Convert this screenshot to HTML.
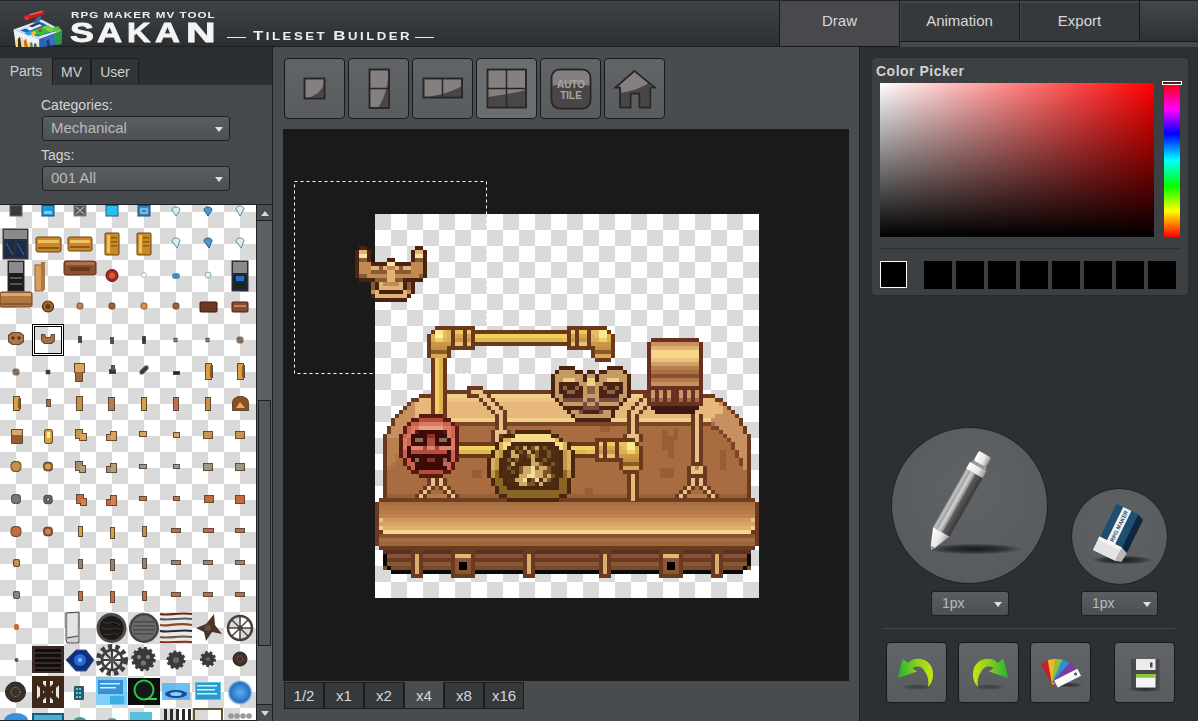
<!DOCTYPE html>
<html><head><meta charset="utf-8">
<style>
*{margin:0;padding:0;box-sizing:border-box}
html,body{width:1198px;height:721px;overflow:hidden;background:#2d3033;font-family:"Liberation Sans",sans-serif;color:#d6d6d6}
.a{position:absolute}
#hdr{left:0;top:0;width:1198px;height:47px;background:linear-gradient(#3f4346,#2c2f32);border-top:1px solid #222426;border-bottom:1px solid #1c1e20}
.htab{top:1px;height:40px;background:#36393c;border:1px solid #17191b;border-top:none;box-shadow:inset 1px 1px 0 #45484b;font-size:15px;text-align:center;line-height:38px;color:#d8d8d8}
#left{left:0;top:47px;width:272px;height:674px;background:#45494c}
#tabbar{left:0;top:0;width:272px;height:38px;background:#2c2f32}
.ltab{top:11px;height:27px;background:#323538;border:1px solid #1c1e20;border-bottom:none;font-size:14px;line-height:26px;text-align:center;color:#d0d0d0}
.lbl{font-size:14px;color:#d4d4d4}
.dd{background:linear-gradient(#5a5e61,#4c5053);border:1px solid #1d1f21;border-radius:3px;font-size:15px;color:#b9bbbc;padding-left:8px;line-height:22px}
.dd:after{content:"";position:absolute;right:6px;top:10px;border-left:4px solid transparent;border-right:4px solid transparent;border-top:5px solid #e0e0e0}
#grid{left:0;top:158px;width:256px;height:516px;background-color:#fff;background-image:linear-gradient(45deg,#dadada 25%,transparent 25%,transparent 75%,#dadada 75%),linear-gradient(45deg,#dadada 25%,transparent 25%,transparent 75%,#dadada 75%);background-size:32px 32px;background-position:0 -8px,16px 8px;overflow:hidden}
#center{left:273px;top:47px;width:586px;height:674px;background:#484c4f}
.tb{top:11px;width:61px;height:61px;border:1px solid #17191b;border-radius:4px;background:linear-gradient(#606467,#585c5f)}
#canvas{left:10px;top:82px;width:566px;height:552px;background:#1a1a1a}
.zt{top:635px;width:40px;height:27px;background:#36393c;border:1px solid #1a1c1e;font-size:15px;line-height:26px;text-align:center;color:#d6d6d6}
#right{left:860px;top:47px;width:338px;height:674px;background:#2d3033}
</style></head><body>
<div id="hdr" class="a">
  
<!-- LOGO -->
<svg class="a" style="left:10px;top:5px" width="60" height="42" viewBox="10 5 60 42">
 <!-- left face -->
 <polygon points="13.5,28.5 39.5,38 39.5,46.5 16,46.5" fill="#eef2f8"/>
 <polygon points="15.5,40 18,36.5 20,40 22,36 24,39.5 26.5,38 28,42 31,40.5 33,43 36,42 39.5,45 39.5,46.5 16,46.5" fill="#f0dc8a"/>
 <polygon points="18,38 20,35.5 21.5,46.5 18,46.5" fill="#3a2a1e"/>
 <polygon points="24,40 26,37.5 28,46.5 24.5,46.5" fill="#c86a2a"/>
 <polygon points="30,42 32,41 33,46.5 30,46.5" fill="#6a8a3a"/>
 <polygon points="34,43 36,42 37,46.5 34,46.5" fill="#3a5aa0"/>
 <!-- right face -->
 <polygon points="39.5,38 62,29.5 61.5,43 39.5,46.5" fill="#2f5fb8"/>
 <polygon points="44,37 60,31 60,42 46,45" fill="#3a70c8"/>
 <polygon points="53,33 62,29.5 61.5,43 56,44" fill="#2a9a40"/>
 <polygon points="46,40 49,38 50,45 47,45.5" fill="#1e3a80"/>
 <!-- top face frame -->
 <polygon points="13.5,28.5 41.5,18.5 62,29.5 39.5,38" fill="#dde8f4"/>
 <polygon points="20,29.5 42,21.5 57,29.8 38,35.5" fill="#1c64bc"/>
 <polygon points="29,31 42,26 52,30 40,34.5" fill="#38c038"/>
 <polygon points="42,26 48,24 55,29.5 50,31.5" fill="#7ad43a"/>
 <polygon points="24,32 30,30 33,33 28,34.5" fill="#2aa0e0"/>
 <polygon points="38,28.5 41,27.5 42.5,30.5 39.5,31.5" fill="#e03a2a"/>
 <polygon points="31,31.5 35,30 36.5,33 32.5,34.5" fill="#f0c040"/>
 <polygon points="52,27 58,25 62,29.5 56,31" fill="#58c040"/>
 <!-- scraper / pen -->
 <polygon points="26,27.5 38,22.5 42,24.5 30,29.5" fill="#f4f8fc"/>
 <polygon points="29,25 39,20.5 42,22 32,26.5" fill="#34415a"/>
 <polygon points="33,23 37.5,16 41.5,15 39,21" fill="#3a6ab8"/>
 <polygon points="25.5,14.8 43,9.5 44.5,13 27.5,19" fill="#d01818"/>
 <ellipse cx="26.5" cy="16.8" rx="2.2" ry="2.5" fill="#f02828"/>
 <polygon points="29,13.2 42,9.8 43,11 30,14.5" fill="#ff8a7a" opacity=".7"/>
</svg>
<div class="a" style="left:71px;top:7.5px;font-weight:bold;font-size:9.5px;letter-spacing:0.85px;color:#eee;transform:scaleX(1.224);transform-origin:0 0;white-space:nowrap">RPG MAKER MV TOOL</div>
  <div class="a" style="left:69.8px;top:17px;font-weight:bold;font-size:27px;color:#f4f4f4;-webkit-text-stroke:0.8px #f4f4f4;transform:scaleX(1.33);transform-origin:0 0">S</div>
  <div class="a" style="left:96.8px;top:17px;font-weight:bold;font-size:27px;color:#f4f4f4;-webkit-text-stroke:0.8px #f4f4f4;transform:scaleX(1.29);transform-origin:0 0">A</div>
  <div class="a" style="left:126.6px;top:17px;font-weight:bold;font-size:27px;color:#f4f4f4;-webkit-text-stroke:0.8px #f4f4f4;transform:scaleX(1.2);transform-origin:0 0">K</div>
  <div class="a" style="left:154.7px;top:17px;font-weight:bold;font-size:27px;color:#f4f4f4;-webkit-text-stroke:0.8px #f4f4f4;transform:scaleX(1.28);transform-origin:0 0">A</div>
  <div class="a" style="left:186.4px;top:17px;font-weight:bold;font-size:27px;color:#f4f4f4;-webkit-text-stroke:0.8px #f4f4f4;transform:scaleX(1.52);transform-origin:0 0">N</div>
  <div class="a" style="left:227px;top:36px;width:19px;height:1px;background:#e6e6e6"></div>
  <div class="a" style="left:253px;top:25px;font-weight:bold;letter-spacing:2px;color:#eee;transform:scaleX(1.255);transform-origin:0 0;white-space:nowrap"><span style="font-size:13.5px">T</span><span style="font-size:10.5px">ILESET </span><span style="font-size:13.5px">B</span><span style="font-size:10.5px">UILDER</span></div>
  <div class="a" style="left:415px;top:36px;width:19px;height:1px;background:#e6e6e6"></div>
  <div class="a" style="left:779px;top:40px;width:419px;height:6px;background:#46494c"></div>
  <div class="a" style="left:1139px;top:0;width:59px;height:41px;background:linear-gradient(#45484b,#2e3134);border-left:1px solid #17191b;border-bottom:1px solid #17191b"></div>
  <div class="a htab" style="left:779px;top:0;height:46px;width:121px;background:#47494c;line-height:40px">Draw</div>
  <div class="a htab" style="left:899px;width:121px">Animation</div>
  <div class="a htab" style="left:1019px;width:121px">Export</div>
</div>
<div id="left" class="a">
  <div id="tabbar" class="a">
    <div class="a ltab" style="left:0;width:52px;background:#45494c;border:none">Parts</div>
    <div class="a ltab" style="left:52px;width:39px">MV</div>
    <div class="a ltab" style="left:91px;width:48px">User</div>
  </div>
  <div class="a lbl" style="left:41px;top:50px">Categories:</div>
  <div class="a dd" style="left:42px;top:69px;width:188px;height:25px">Mechanical</div>
  <div class="a lbl" style="left:41px;top:100px">Tags:</div>
  <div class="a dd" style="left:42px;top:119px;width:188px;height:25px">001 All</div>
  <div class="a" style="left:0;top:157px;width:272px;height:1px;background:#1c1e20"></div>
  <div id="grid" class="a"></div>
<!-- GRID SPRITES -->
<svg class="a" style="left:0;top:158px" width="256" height="516" viewBox="0 205 256 516">
<defs>
 <pattern id="chk2" x="0" y="196" width="32" height="32" patternUnits="userSpaceOnUse">
  <rect width="32" height="32" fill="#fff"/><rect width="16" height="16" fill="#dadada"/><rect x="16" y="16" width="16" height="16" fill="#dadada"/>
 </pattern>
 <filter id="outl" x="-10%" y="-10%" width="120%" height="120%"><feMorphology in="SourceAlpha" operator="dilate" radius="0.8" result="d"/><feFlood flood-color="#4a2e14" flood-opacity=".85"/><feComposite in2="d" operator="in" result="o"/><feMerge><feMergeNode in="o"/><feMergeNode in="SourceGraphic"/></feMerge></filter><radialGradient id="bl"><stop offset="0" stop-color="#5ab0f0"/><stop offset=".8" stop-color="#2a70c0"/><stop offset="1" stop-color="#8ad0ff" stop-opacity=".4"/></radialGradient>
</defs>
<rect x="0" y="205" width="256" height="516" fill="url(#chk2)"/>
<!-- row0 -->
<rect x="10" y="205.5" width="12" height="10.5" fill="#3a3a42" stroke="#666" stroke-width="1"/>
<rect x="42" y="205.5" width="12" height="10.5" fill="#1a9ad8" stroke="#1a4a70" stroke-width="1"/><rect x="44" y="211" width="8" height="3" fill="#6ad0f8"/>
<rect x="74" y="205.5" width="12" height="10.5" fill="#5a5a62" stroke="#888" stroke-width="1"/><path d="M76,207 L84,214 M84,207 L76,214" stroke="#ccc" stroke-width="1"/>
<rect x="106" y="205.5" width="12" height="10.5" fill="#28c0f0" stroke="#1a5a80" stroke-width="1"/>
<rect x="138" y="205.5" width="12" height="10.5" fill="#2a88c8" stroke="#1a4a70" stroke-width="1"/><rect x="141" y="209" width="6" height="4" fill="none" stroke="#cde" stroke-width="1"/>
<path d="M172,210 C172,206 180,206 180,210 L176,216 Z" fill="#dceaf2" stroke="#5a8aa8" stroke-width="1"/>
<path d="M204,210 C204,206 212,206 212,210 L208,216 Z" fill="#4a9ad0" stroke="#1e5a80" stroke-width="1"/>
<path d="M236,209 C236,205 244,205 244,209 L240,216 Z" fill="#e0ecf2" stroke="#5a8aa8" stroke-width="1"/>
<!-- row1 -->
<rect x="3" y="229" width="25" height="30" fill="#2a2e38" stroke="#444" stroke-width="1"/><rect x="4" y="230" width="23" height="9" fill="#8a8a8c"/>
<rect x="5" y="241" width="9" height="16" fill="#1a2a4a"/><rect x="16" y="241" width="9" height="16" fill="#1a2a4a"/><path d="M6,243 L13,255 M17,243 L24,255" stroke="#4a6a8a" stroke-width="1"/>
<rect x="36" y="237" width="25" height="15" rx="2" fill="#c88a28" stroke="#6a4010" stroke-width="1"/><rect x="38" y="240" width="21" height="3" fill="#f0c060"/><rect x="38" y="247" width="21" height="2" fill="#8a5a18"/>
<rect x="68" y="237" width="24" height="14" rx="2" fill="#c88a28" stroke="#6a4010" stroke-width="1"/><rect x="70" y="240" width="20" height="3" fill="#f0c060"/><rect x="70" y="246" width="20" height="2" fill="#8a5a18"/>
<rect x="105" y="233" width="14" height="22" rx="1" fill="#c88a28" stroke="#6a4010" stroke-width="1"/><rect x="107" y="235" width="3" height="18" fill="#f0c060"/><g fill="#8a5a18"><rect x="111" y="237" width="6" height="1.5"/><rect x="111" y="241" width="6" height="1.5"/><rect x="111" y="245" width="6" height="1.5"/></g>
<rect x="137" y="233" width="14" height="22" rx="1" fill="#c88a28" stroke="#6a4010" stroke-width="1"/><rect x="139" y="235" width="3" height="18" fill="#f0c060"/><g fill="#8a5a18"><rect x="143" y="237" width="6" height="1.5"/><rect x="143" y="241" width="6" height="1.5"/><rect x="143" y="245" width="6" height="1.5"/></g>
<path d="M172,241 C172,237 180,237 180,241 L177,248 Z" fill="#dceaf2" stroke="#5a8aa8" stroke-width="1"/>
<path d="M204,241 C204,237 212,237 212,241 L209,248 Z" fill="#4a9ad0" stroke="#1e5a80" stroke-width="1"/>
<path d="M236,241 C236,237 244,237 244,241 L241,248 Z" fill="#e0ecf2" stroke="#5a8aa8" stroke-width="1"/>
<!-- row2 -->
<rect x="8" y="261" width="16" height="30" fill="#1a1a1a" stroke="#333" stroke-width="1"/><rect x="9" y="262" width="14" height="11" fill="#8a8a8c"/><rect x="10" y="277" width="12" height="2" fill="#555"/><rect x="10" y="283" width="12" height="2" fill="#555"/>
<rect x="35" y="265" width="8" height="26" fill="#d8a060" stroke="#8a5a30" stroke-width="1"/><rect x="41" y="262" width="4" height="28" fill="#b07840"/>
<rect x="64" y="261" width="32" height="14" rx="2" fill="#8a5030" stroke="#5a3018" stroke-width="1"/><rect x="66" y="262" width="28" height="3" fill="#b07050"/><rect x="70" y="267" width="20" height="4" fill="#6a3a20"/>
<circle cx="112" cy="275.5" r="6" fill="#a8281a" stroke="#5a1a10" stroke-width="1"/><circle cx="112" cy="275.5" r="3" fill="#d85a40"/>
<circle cx="144" cy="275" r="2.5" fill="#fff" stroke="#aaa" stroke-width=".8"/>
<ellipse cx="176" cy="276" rx="4" ry="3" fill="#3a90c0"/>
<circle cx="208" cy="275" r="3" fill="#eee" stroke="#7aa" stroke-width="1"/>
<rect x="232" y="261" width="16" height="30" fill="#1a2838" stroke="#333" stroke-width="1"/><rect x="233" y="262" width="14" height="11" fill="#8a8a8c"/><rect x="236" y="276" width="8" height="5" fill="#2a70c0"/><rect x="236" y="283" width="8" height="6" fill="#222"/>
<!-- row3 -->
<rect x="0" y="292" width="32" height="15" rx="2" fill="#b07840" stroke="#6a4020" stroke-width="1"/><rect x="1" y="293" width="30" height="3" fill="#d8a868"/><rect x="1" y="303" width="30" height="2" fill="#8a5830"/>
<circle cx="48" cy="306.5" r="5.5" fill="#a06828" stroke="#4a2a10" stroke-width="1.2"/><circle cx="48" cy="306.5" r="2.5" fill="#5a3a18"/>
<rect x="77" y="303" width="6" height="6" rx="2" fill="#c08060" stroke="#6a4030" stroke-width=".8"/>
<rect x="109" y="303" width="6" height="6" rx="2" fill="#a06040" stroke="#5a3020" stroke-width=".8"/>
<rect x="141" y="303" width="6" height="6" rx="2" fill="#d89040" stroke="#7a4a20" stroke-width=".8"/>
<rect x="173" y="303" width="6" height="6" rx="2" fill="#a06040" stroke="#5a3020" stroke-width=".8"/>
<rect x="200" y="302" width="17" height="10" rx="1" fill="#6a3a20" stroke="#3a1a08" stroke-width="1"/>
<rect x="232" y="302" width="16" height="10" rx="1" fill="#8a4a30" stroke="#4a2010" stroke-width="1"/><rect x="234" y="305" width="12" height="2" fill="#c08060"/>
<g filter="url(#outl)"><!-- row4 -->
<path d="M9,336 L13,333 L19,333 L23,336 L23,341 L19,344 L13,344 L9,341 Z" fill="#b07848"/><circle cx="13" cy="338" r="1.8" fill="#5a3418"/><circle cx="19" cy="338" r="1.8" fill="#5a3418"/>
<path d="M42,335 L44,335 L45,338 L51,338 L52,335 L54,335 L54,340 L51,343 L45,343 L42,340 Z" fill="#a87040"/>
<rect x="79" y="337" width="2" height="5" fill="#444"/><rect x="111" y="338" width="2" height="5" fill="#555"/><rect x="143" y="337" width="2" height="6" fill="#333"/>
<circle cx="175.5" cy="340" r="1.2" fill="#888"/><circle cx="207.5" cy="340" r="1.2" fill="#888"/><circle cx="240" cy="340" r="2" fill="none" stroke="#8a6040" stroke-width="1"/>
<!-- row5 -->
<circle cx="16" cy="372" r="2" fill="none" stroke="#8a6040" stroke-width="1"/><circle cx="48" cy="372" r="1.5" fill="#333"/>
<rect x="75" y="364" width="9" height="8" fill="#d8a858"/><rect x="76" y="372" width="6" height="9" fill="#a06838"/>
<rect x="110" y="370" width="5" height="3" fill="#333"/><rect x="112" y="366" width="2" height="5" fill="#555"/>
<path d="M141,373 L147,367" stroke="#333" stroke-width="2"/>
<rect x="174" y="372" width="5" height="2" fill="#222"/>
<rect x="206" y="364" width="5" height="15" fill="#d8a040"/><rect x="210" y="366" width="2" height="11" fill="#8a5a20"/>
<rect x="238" y="364" width="5" height="15" fill="#d8a040"/><rect x="242" y="366" width="2" height="11" fill="#8a5a20"/>
<!-- row6 -->
<rect x="14" y="397" width="5" height="13" fill="#d8a040"/><rect x="18" y="399" width="2" height="9" fill="#8a5a20"/>
<rect x="47" y="400" width="3" height="6" fill="#a07050"/>
<rect x="77" y="397" width="5" height="13" fill="#c89040"/><rect x="109" y="398" width="5" height="12" fill="#b08050"/>
<rect x="142" y="398" width="4" height="12" fill="#d8a040"/><rect x="174" y="398" width="4" height="12" fill="#c07050"/><rect x="206" y="398" width="4" height="12" fill="#c89040"/>
<path d="M233,410 L233,404 C233,399 238,397 240.5,397 C243,397 248,399 248,404 L248,410 Z" fill="#8a5020"/><path d="M236,408 L240,402 L245,408 Z" fill="#e0b060"/>
<!-- row7 -->
<rect x="12" y="430" width="10" height="13" rx="1" fill="#9a5a30"/><rect x="12" y="430" width="10" height="5" fill="#d8a868"/>
<rect x="45" y="430" width="7" height="13" rx="3" fill="#e0a838"/><rect x="47" y="432" width="3" height="6" fill="#fff0a0"/>
<rect x="76" y="430" width="6" height="8" fill="#c89848"/><rect x="80" y="434" width="6" height="6" fill="#d8a858"/>
<rect x="107" y="435" width="6" height="5" fill="#c89848"/><rect x="111" y="432" width="5" height="8" fill="#d8a858"/>
<rect x="140" y="432" width="6" height="4" fill="#d8a858"/><rect x="174" y="433" width="5" height="4" fill="#d8a858"/>
<rect x="204" y="432" width="8" height="6" fill="#c89848"/><rect x="236" y="432" width="8" height="6" fill="#c89848"/>
<!-- row8 -->
<circle cx="16" cy="466.5" r="4.5" fill="#c89040"/><circle cx="48" cy="466.5" r="3.5" fill="#d8a040" stroke="#8a6030" stroke-width="1"/>
<rect x="76" y="462" width="6" height="8" fill="#a09070"/><rect x="80" y="466" width="5" height="6" fill="#b0a080"/>
<rect x="107" y="467" width="6" height="5" fill="#a09070"/><rect x="111" y="464" width="5" height="8" fill="#b0a080"/>
<rect x="140" y="465" width="6" height="3" fill="#999"/><rect x="174" y="465" width="5" height="3" fill="#999"/>
<rect x="204" y="464" width="8" height="6" fill="#998"/><rect x="236" y="464" width="8" height="6" fill="#998"/>
<!-- row9 -->
<circle cx="16" cy="499" r="4" fill="#777"/><circle cx="48" cy="499.5" r="3" fill="none" stroke="#666" stroke-width="1.5"/>
<rect x="77" y="495" width="6" height="8" fill="#c86a3a"/><rect x="81" y="499" width="5" height="6" fill="#d88050"/>
<rect x="107" y="500" width="6" height="5" fill="#c86a3a"/><rect x="111" y="496" width="5" height="9" fill="#d88050"/>
<rect x="140" y="497" width="6" height="3" fill="#d07040"/><rect x="174" y="497" width="5" height="3" fill="#d07040"/>
<rect x="205" y="496" width="8" height="6" fill="#c86a3a"/><rect x="236" y="496" width="8" height="7" fill="#c86a3a"/>
<!-- row10 -->
<circle cx="16" cy="531.5" r="4.5" fill="#c86a3a"/><circle cx="48" cy="531.5" r="3.5" fill="#d88050" stroke="#8a4a2a" stroke-width="1"/>
<rect x="79" y="527" width="3" height="9" fill="#d8a040"/><rect x="111" y="528" width="3" height="10" fill="#d8a040"/><rect x="143" y="527" width="3" height="9" fill="#c89040"/>
<rect x="172" y="529" width="8" height="3" fill="#c86a3a"/><rect x="204" y="529" width="9" height="3" fill="#c86a3a"/><rect x="236" y="529" width="8" height="3" fill="#c86a3a"/>
<!-- row11 -->
<rect x="14" y="560" width="5" height="6" rx="2" fill="#c89040"/>
<rect x="79" y="560" width="3" height="8" fill="#888"/><rect x="111" y="560" width="3" height="10" fill="#888"/><rect x="143" y="559" width="3" height="9" fill="#888"/>
<rect x="172" y="561" width="8" height="3" fill="#888"/><rect x="204" y="561" width="8" height="3" fill="#888"/><rect x="236" y="561" width="8" height="3" fill="#888"/>
<!-- row12 -->
<rect x="14" y="592" width="5" height="6" rx="2" fill="#888"/>
<rect x="79" y="592" width="3" height="8" fill="#c86a3a"/><rect x="111" y="592" width="3" height="10" fill="#c86a3a"/><rect x="143" y="592" width="3" height="8" fill="#c86a3a"/>
<rect x="172" y="593" width="8" height="3" fill="#c86a3a"/><rect x="204" y="593" width="8" height="3" fill="#c86a3a"/><rect x="236" y="593" width="8" height="3" fill="#c86a3a"/>
</g>
<rect x="32.5" y="324.5" width="31" height="31" fill="none" stroke="#000" stroke-width="1"/>
<rect x="33.5" y="325.5" width="29" height="29" fill="none" stroke="#fff" stroke-width="1"/>
<rect x="34.5" y="326.5" width="27" height="27" fill="none" stroke="#000" stroke-width="1"/>
<!-- row13 -->
<rect x="14" y="624" width="5" height="6" rx="2" fill="#c86a3a"/>
<path d="M66,613 L79,612 L79,643 L67,643 L66,640 Z" fill="#d0d0d0" stroke="#444" stroke-width="1"/><rect x="68" y="614" width="9" height="22" fill="#e4e4e4"/><path d="M67,638 L78,636" stroke="#444" stroke-width="1"/>
<circle cx="111.5" cy="628" r="15" fill="#4a4a4a"/><circle cx="111.5" cy="628" r="12" fill="#1e1a18"/><g stroke="#4a3a34" stroke-width="1"><path d="M103,622 C108,625 112,620 120,625"/><path d="M102,628 C108,631 114,626 121,630"/><path d="M104,634 C109,636 114,632 119,635"/></g>
<circle cx="144" cy="628" r="15" fill="#444"/><circle cx="144" cy="628" r="12.5" fill="#6a6a6a"/><g fill="#4a4a4a"><rect x="134" y="621" width="20" height="1.5"/><rect x="133" y="625" width="22" height="1.5"/><rect x="133" y="629" width="22" height="1.5"/><rect x="134" y="633" width="20" height="1.5"/></g>
<rect x="160" y="612" width="32" height="31" fill="#ece8e4"/>
<g fill="none" stroke-width="2.2"><path d="M160,614 C168,616 178,612 192,614" stroke="#6a2a1a"/><path d="M160,619 C170,621 180,617 192,619" stroke="#5a5a6a"/><path d="M160,625 C168,627 176,622 192,625" stroke="#8a4a2a"/><path d="M160,631 C170,633 180,629 192,631" stroke="#1e2a4a"/><path d="M160,637 C168,639 178,635 192,637" stroke="#6a5a4a"/><path d="M160,642 C170,643 180,641 192,642" stroke="#8a2a1a"/></g>
<path d="M196,628 L206,624 L214,614 L215,625 L222,634 L212,632 L206,641 L204,632 Z" fill="#4a3628"/><circle cx="208" cy="628" r="3" fill="#6a5040"/>
<circle cx="240" cy="628" r="12" fill="none" stroke="#4a3e36" stroke-width="2.5"/><circle cx="240" cy="628" r="2.5" fill="#4a3e36"/><g stroke="#4a3e36" stroke-width="1.5"><line x1="229" y1="628" x2="251" y2="628"/><line x1="240" y1="617" x2="240" y2="639"/><line x1="232" y1="620" x2="248" y2="636"/><line x1="248" y1="620" x2="232" y2="636"/></g>
<!-- row14 -->
<circle cx="16.5" cy="660" r="2" fill="#555"/>
<rect x="32" y="646" width="32" height="27" fill="#3a2a28"/><g fill="#0e0e0e"><rect x="35" y="649" width="26" height="3"/><rect x="35" y="654" width="26" height="3"/><rect x="35" y="659" width="26" height="3"/><rect x="35" y="664" width="26" height="3"/><rect x="35" y="669" width="26" height="2"/></g>
<path d="M66,660 L76,650 L86,650 L94,660 L86,671 L76,671 Z" fill="#10307a" stroke="#3a5a90" stroke-width="1"/><circle cx="80" cy="660" r="6" fill="#2a6ad8"/><circle cx="80" cy="660" r="2" fill="#8ac0ff"/>
<g fill="none" stroke="#3e3e3e"><circle cx="112" cy="660" r="13.5" stroke-width="5" stroke-dasharray="4.2 3.2"/><circle cx="112" cy="660" r="10" stroke-width="2.5"/></g><g stroke="#3e3e3e" stroke-width="2.2"><path d="M112,650 L112,670 M102,660 L122,660 M105,653 L119,667 M119,653 L105,667"/></g><circle cx="112" cy="660" r="3" fill="#555"/>
<circle cx="143.5" cy="659" r="10.5" fill="#3a3a3a" stroke="#3a3a3a" stroke-width="3.5" stroke-dasharray="3 2.5"/><circle cx="139" cy="657" r="2" fill="#888"/><circle cx="148" cy="657" r="2" fill="#888"/><circle cx="143.5" cy="663" r="2.5" fill="#777"/>
<circle cx="176" cy="660" r="8" fill="#3a3a3a" stroke="#3a3a3a" stroke-width="3" stroke-dasharray="2.8 2.2"/><circle cx="176" cy="660" r="3" fill="#6a6a6a"/>
<circle cx="208" cy="659" r="6.5" fill="#3a3a3a" stroke="#3a3a3a" stroke-width="3" stroke-dasharray="2.5 2"/><circle cx="208" cy="659" r="2" fill="#666"/>
<circle cx="240" cy="659" r="7" fill="#3e302a" stroke="#222" stroke-width="1"/><circle cx="240" cy="659" r="3" fill="none" stroke="#a07050" stroke-width="1" stroke-dasharray="1 1"/>
<!-- row15 -->
<circle cx="15.5" cy="692" r="10" fill="#3a302a" stroke="#222" stroke-width="1"/><circle cx="15.5" cy="692" r="4.5" fill="none" stroke="#c8a050" stroke-width="1" stroke-dasharray="1 1.2"/>
<rect x="32" y="676" width="32" height="32" fill="#3e2818"/><g fill="#e8e8e8"><rect x="37" y="681" width="3" height="22"/><rect x="43" y="681" width="3" height="22"/><rect x="50" y="681" width="3" height="22"/><rect x="56" y="681" width="3" height="22"/></g><path d="M34,679 L62,705 M62,679 L34,705" stroke="#3e2818" stroke-width="5"/>
<rect x="74" y="686" width="10" height="14" rx="1" fill="#2a5a70"/><g fill="#5ad0d0"><rect x="76" y="688" width="2" height="2"/><rect x="79" y="688" width="2" height="2"/><rect x="76" y="692" width="2" height="2"/><rect x="79" y="692" width="2" height="2"/><rect x="76" y="696" width="2" height="2"/><rect x="79" y="696" width="2" height="2"/></g>
<rect x="96" y="677" width="31" height="28" fill="#6ac8f8" opacity=".85"/><rect x="98" y="680" width="25" height="14" fill="#3a90d8"/><g fill="#c8f0ff"><rect x="100" y="683" width="20" height="1.5"/><rect x="100" y="687" width="16" height="1.5"/></g><rect x="110" y="696" width="14" height="8" fill="#3ab0e8"/>
<rect x="128" y="678" width="32" height="27" fill="#0e0e0e"/><circle cx="144" cy="690" r="9.5" fill="#151a18" stroke="#2ac04a" stroke-width="2"/><rect x="145" y="698" width="12" height="2" fill="#3ad04a"/>
<rect x="162" y="683" width="28" height="17" fill="#4ab0f0" opacity=".8"/><ellipse cx="176" cy="694" rx="11" ry="4" fill="#1a4a9a"/><ellipse cx="176" cy="694" rx="6" ry="2" fill="#8ad0ff"/>
<rect x="195" y="682" width="26" height="18" fill="#5ac0e8"/><rect x="196" y="683" width="24" height="16" fill="#2a9ac8"/><g fill="#d0f4ff"><rect x="197" y="685" width="20" height="1.5"/><rect x="197" y="689" width="18" height="1.5"/><rect x="197" y="693" width="20" height="1.5"/></g>
<circle cx="240" cy="692.5" r="12.5" fill="url(#bl)"/>
<!-- row16 -->
<ellipse cx="16" cy="721" rx="12" ry="8" fill="#3a90e0"/>
<rect x="32" y="713" width="32" height="8" fill="#1a5a80"/><rect x="34" y="715" width="28" height="6" fill="#4ab0d0"/>
<ellipse cx="80" cy="721" rx="6" ry="4" fill="#4a98b0"/><ellipse cx="112" cy="721" rx="5" ry="3" fill="#4aa0c0"/>
<rect x="130" y="712" width="22" height="9" fill="#5ac0e0"/>
<g fill="#2a2a2a"><rect x="164" y="709" width="3" height="12"/><rect x="170" y="709" width="3" height="12"/><rect x="176" y="709" width="3" height="12"/><rect x="182" y="709" width="3" height="12"/><rect x="188" y="709" width="3" height="12"/></g>
<rect x="194" y="709" width="28" height="12" fill="none" stroke="#6a5030" stroke-width="2"/>
<g fill="#999"><circle cx="231" cy="716" r="2.8"/><circle cx="237" cy="716" r="2.8"/><circle cx="243" cy="716" r="2.8"/><circle cx="249" cy="716" r="2.8"/></g>
<rect x="0" y="720" width="256" height="1" fill="#1d1f21"/>
</svg>

  <div class="a" style="left:256px;top:158px;width:16px;height:516px;background:#5c6063;border-left:1px solid #1d1f21"></div>
  <div class="a" style="left:257px;top:158px;width:15px;height:16px;background:#4a4e51;border-bottom:1px solid #1d1f21"></div>
  <div class="a" style="left:261px;top:164px;width:0;height:0;border-left:4px solid transparent;border-right:4px solid transparent;border-bottom:5px solid #d8d8d8"></div>
  <div class="a" style="left:258px;top:353px;width:13px;height:246px;background:#53575a;border:1px solid #1d1f21"></div>
  <div class="a" style="left:257px;top:657px;width:15px;height:17px;background:#4a4e51;border-top:1px solid #1d1f21"></div>
  <div class="a" style="left:261px;top:664px;width:0;height:0;border-left:4px solid transparent;border-right:4px solid transparent;border-top:5px solid #d8d8d8"></div>
</div>
<div class="a" style="left:272px;top:47px;width:1px;height:674px;background:#1c1e20"></div>
<div id="center" class="a">
  <div class="a tb" style="left:11px"></div>
  <div class="a tb" style="left:75px"></div>
  <div class="a tb" style="left:139px"></div>
  <div class="a tb" style="left:203px;background:#6a6e71"></div>
  <div class="a tb" style="left:267px"></div>
  <div class="a tb" style="left:331px"></div>
  <div id="canvas" class="a"></div>
  <div class="a zt" style="left:11px">1/2</div>
  <div class="a zt" style="left:51px">x1</div>
  <div class="a zt" style="left:91px">x2</div>
  <div class="a zt" style="left:131px;background:#484c4f;border-top-color:#484c4f">x4</div>
  <div class="a zt" style="left:171px">x8</div>
  <div class="a zt" style="left:211px">x16</div>
</div>
<div class="a" style="left:859px;top:47px;width:1px;height:674px;background:#1c1e20"></div>
<div id="right" class="a">
  <div class="a" style="left:11px;top:10px;width:318px;height:239px;background:#3d4043;border:1px solid #2a2c2e;border-radius:5px"></div>
  <div class="a" style="left:16px;top:16px;font-weight:bold;font-size:14px;letter-spacing:0.5px;color:#d2d2d2">Color Picker</div>
  <div class="a" style="left:20px;top:36px;width:274px;height:154px;background:linear-gradient(to top,#000,rgba(0,0,0,0)),linear-gradient(to right,#fff,#f00)"></div>
  <div class="a" style="left:304px;top:36px;width:16px;height:154px;background:linear-gradient(#f00 0%,#f0f 17%,#00f 33%,#0ff 50%,#0f0 67%,#ff0 83%,#f00 100%)"></div>
  <div class="a" style="left:302px;top:34px;width:20px;height:4px;border:1px solid #fff;background:#5a1a25"></div>
  <div class="a" style="left:20px;top:201px;width:300px;height:1px;background:#2c2f31"></div>
  <div class="a" style="left:20px;top:214px;width:27px;height:27px;border:1px solid #fff;background:#000"></div>
  <div class="a" style="left:64px;top:214px;width:28px;height:28px;background:#000"></div>
  <div class="a" style="left:96px;top:214px;width:28px;height:28px;background:#000"></div>
  <div class="a" style="left:128px;top:214px;width:28px;height:28px;background:#000"></div>
  <div class="a" style="left:160px;top:214px;width:28px;height:28px;background:#000"></div>
  <div class="a" style="left:192px;top:214px;width:28px;height:28px;background:#000"></div>
  <div class="a" style="left:224px;top:214px;width:28px;height:28px;background:#000"></div>
  <div class="a" style="left:256px;top:214px;width:28px;height:28px;background:#000"></div>
  <div class="a" style="left:288px;top:214px;width:28px;height:28px;background:#000"></div>
  <div class="a" style="left:31px;top:380px;width:157px;height:157px;border-radius:50%;background:radial-gradient(circle at 50% 40%,#5f6366,#55595c);border:1px solid #1f2123"></div>
  <div class="a" style="left:211px;top:441px;width:97px;height:97px;border-radius:50%;background:radial-gradient(circle at 50% 40%,#5f6366,#55595c);border:1px solid #1f2123"></div>
  <div class="a dd" style="left:71px;top:544px;width:78px;height:25px;font-size:14px;padding-left:10px">1px</div>
  <div class="a dd" style="left:221px;top:544px;width:77px;height:25px;font-size:14px;padding-left:10px">1px</div>
  <div class="a" style="left:23px;top:581px;width:292px;height:1px;background:#474a4d"></div>
  <div class="a tb" style="left:26px;top:595px"></div>
  <div class="a tb" style="left:98px;top:595px"></div>
  <div class="a tb" style="left:170px;top:595px"></div>
  <div class="a tb" style="left:254px;top:595px"></div>
</div>


<!-- CANVAS ART -->
<svg class="a" style="left:283px;top:129px" width="566" height="552" viewBox="283 129 566 552" shape-rendering="crispEdges">
<defs>
 <pattern id="chk" x="375" y="214" width="32" height="32" patternUnits="userSpaceOnUse">
  <rect width="32" height="32" fill="#fff"/><rect width="16" height="16" fill="#dadada"/><rect x="16" y="16" width="16" height="16" fill="#dadada"/>
 </pattern>
 <linearGradient id="cyl" x1="0" y1="0" x2="0" y2="1">
  <stop offset="0" stop-color="#b8804e"/><stop offset=".1" stop-color="#d8a868"/><stop offset=".2" stop-color="#eccb8a"/><stop offset=".32" stop-color="#f8e0a0"/><stop offset=".45" stop-color="#e0b478"/>
  <stop offset=".58" stop-color="#c48c58"/><stop offset=".7" stop-color="#a87040"/><stop offset=".8" stop-color="#8a5430"/><stop offset=".9" stop-color="#b8845a"/><stop offset="1" stop-color="#d8a878"/>
 </linearGradient>
 <linearGradient id="pipeh" x1="0" y1="0" x2="0" y2="1">
  <stop offset="0" stop-color="#6a3c1c"/><stop offset=".14" stop-color="#6a3c1c"/><stop offset=".15" stop-color="#c09040"/><stop offset=".3" stop-color="#f2d272"/><stop offset=".55" stop-color="#e8c460"/><stop offset=".85" stop-color="#b08438"/><stop offset=".86" stop-color="#6a3c1c"/><stop offset="1" stop-color="#6a3c1c"/>
 </linearGradient>
 <linearGradient id="pipev" x1="0" y1="0" x2="1" y2="0">
  <stop offset="0" stop-color="#6a3c1c"/><stop offset=".16" stop-color="#6a3c1c"/><stop offset=".17" stop-color="#c89848"/><stop offset=".35" stop-color="#f2d272"/><stop offset=".6" stop-color="#d8ac50"/><stop offset=".83" stop-color="#a87a34"/><stop offset=".84" stop-color="#6a3c1c"/><stop offset="1" stop-color="#6a3c1c"/>
 </linearGradient>
 <radialGradient id="ball" cx=".4" cy=".3" r=".75"><stop offset="0" stop-color="#fff4b0"/><stop offset=".3" stop-color="#ecc862"/><stop offset=".7" stop-color="#c09040"/><stop offset="1" stop-color="#8a6028"/></radialGradient>
 <linearGradient id="ring" x1="0" y1="0" x2="0" y2="1"><stop offset="0" stop-color="#f4d888"/><stop offset=".4" stop-color="#d8b060"/><stop offset=".8" stop-color="#a87830"/><stop offset="1" stop-color="#7a5018"/></linearGradient>
 <linearGradient id="redr" x1="0" y1="0" x2="0" y2="1"><stop offset="0" stop-color="#e88a6a"/><stop offset=".5" stop-color="#cc5e48"/><stop offset="1" stop-color="#a83a2a"/></linearGradient>
 <linearGradient id="tankl" x1="0" y1="0" x2="1" y2="0"><stop offset="0" stop-color="#b07446"/><stop offset=".3" stop-color="#c28a58"/><stop offset="1" stop-color="#a96b40"/></linearGradient>
 <linearGradient id="tankr" x1="0" y1="0" x2="1" y2="0"><stop offset="0" stop-color="#a96b40"/><stop offset=".55" stop-color="#c48c5a"/><stop offset=".85" stop-color="#d09a66"/><stop offset="1" stop-color="#aa6e42"/></linearGradient>
</defs>
<rect x="375" y="214" width="384" height="384" fill="url(#chk)"/>
<rect x="294.5" y="181.5" width="192" height="192" fill="none" stroke="#fff" stroke-width="1" stroke-dasharray="3 3" shape-rendering="auto"/>

<!-- tank body -->
<rect x="431" y="394" width="268" height="4" fill="#6a3a20"/>
<rect x="431" y="398" width="268" height="4" fill="#eec48a"/>
<rect x="447" y="390" width="200" height="4" fill="#6a3a20"/><rect x="447" y="394" width="200" height="4" fill="#f0d088"/>
<rect x="431" y="402" width="268" height="16" fill="#e6b87c"/>
<rect x="431" y="418" width="268" height="4" fill="#f2d088"/>
<rect x="431" y="422" width="268" height="4" fill="#7a4628"/>
<rect x="431" y="426" width="268" height="68" fill="#a96b40"/>
<rect x="431" y="494" width="268" height="4" fill="#9a6038"/>
<rect x="431" y="498" width="268" height="4" fill="#a96b40"/>
<g><rect x="419" y="394" width="12" height="4" fill="#6a3a20"/><rect x="411" y="398" width="8" height="4" fill="#6a3a20"/><rect x="419" y="398" width="12" height="4" fill="#e6b87c"/><rect x="407" y="402" width="4" height="4" fill="#6a3a20"/><rect x="411" y="402" width="4" height="4" fill="#c89060"/><rect x="415" y="402" width="16" height="4" fill="#e6b87c"/><rect x="403" y="406" width="4" height="4" fill="#6a3a20"/><rect x="407" y="406" width="8" height="4" fill="#c89060"/><rect x="415" y="406" width="16" height="4" fill="#e6b87c"/><rect x="399" y="410" width="4" height="4" fill="#6a3a20"/><rect x="403" y="410" width="12" height="4" fill="#c89060"/><rect x="415" y="410" width="16" height="4" fill="#e6b87c"/><rect x="395" y="414" width="4" height="4" fill="#6a3a20"/><rect x="399" y="414" width="16" height="4" fill="#c89060"/><rect x="415" y="414" width="16" height="4" fill="#e6b87c"/><rect x="391" y="418" width="4" height="4" fill="#6a3a20"/><rect x="395" y="418" width="20" height="4" fill="#c89060"/><rect x="415" y="418" width="16" height="4" fill="#f2d088"/><rect x="391" y="422" width="4" height="4" fill="#6a3a20"/><rect x="395" y="422" width="24" height="4" fill="#c89060"/><rect x="419" y="422" width="12" height="4" fill="#7a4628"/><rect x="387" y="426" width="4" height="4" fill="#6a3a20"/><rect x="391" y="426" width="24" height="4" fill="#c89060"/><rect x="415" y="426" width="4" height="4" fill="#b07446"/><rect x="419" y="426" width="12" height="4" fill="#a96b40"/><rect x="387" y="430" width="4" height="4" fill="#6a3a20"/><rect x="391" y="430" width="20" height="4" fill="#c89060"/><rect x="411" y="430" width="4" height="4" fill="#b07446"/><rect x="415" y="430" width="16" height="4" fill="#a96b40"/><rect x="383" y="434" width="4" height="4" fill="#6a3a20"/><rect x="387" y="434" width="20" height="4" fill="#c89060"/><rect x="407" y="434" width="4" height="4" fill="#b07446"/><rect x="411" y="434" width="20" height="4" fill="#a96b40"/><rect x="383" y="438" width="4" height="4" fill="#6a3a20"/><rect x="387" y="438" width="16" height="4" fill="#b88050"/><rect x="403" y="438" width="4" height="4" fill="#b07446"/><rect x="407" y="438" width="24" height="4" fill="#a96b40"/><rect x="383" y="442" width="4" height="4" fill="#6a3a20"/><rect x="387" y="442" width="16" height="4" fill="#b88050"/><rect x="403" y="442" width="4" height="4" fill="#b07446"/><rect x="407" y="442" width="24" height="4" fill="#a96b40"/><rect x="383" y="446" width="4" height="4" fill="#6a3a20"/><rect x="387" y="446" width="12" height="4" fill="#b88050"/><rect x="399" y="446" width="4" height="4" fill="#b07446"/><rect x="403" y="446" width="28" height="4" fill="#a96b40"/><rect x="383" y="450" width="4" height="4" fill="#6a3a20"/><rect x="387" y="450" width="12" height="4" fill="#b88050"/><rect x="399" y="450" width="4" height="4" fill="#b07446"/><rect x="403" y="450" width="28" height="4" fill="#a96b40"/><rect x="383" y="454" width="4" height="4" fill="#6a3a20"/><rect x="387" y="454" width="8" height="4" fill="#b88050"/><rect x="395" y="454" width="4" height="4" fill="#b07446"/><rect x="399" y="454" width="32" height="4" fill="#a96b40"/><rect x="383" y="458" width="4" height="4" fill="#6a3a20"/><rect x="387" y="458" width="8" height="4" fill="#b88050"/><rect x="395" y="458" width="4" height="4" fill="#b07446"/><rect x="399" y="458" width="32" height="4" fill="#a96b40"/><rect x="383" y="462" width="4" height="4" fill="#6a3a20"/><rect x="387" y="462" width="4" height="4" fill="#b88050"/><rect x="391" y="462" width="4" height="4" fill="#b07446"/><rect x="395" y="462" width="36" height="4" fill="#a96b40"/><rect x="383" y="466" width="4" height="4" fill="#6a3a20"/><rect x="387" y="466" width="4" height="4" fill="#b07446"/><rect x="391" y="466" width="40" height="4" fill="#a96b40"/><rect x="383" y="470" width="4" height="4" fill="#6a3a20"/><rect x="387" y="470" width="44" height="4" fill="#a96b40"/><rect x="383" y="474" width="4" height="4" fill="#6a3a20"/><rect x="387" y="474" width="44" height="4" fill="#a96b40"/><rect x="383" y="478" width="4" height="4" fill="#6a3a20"/><rect x="387" y="478" width="44" height="4" fill="#a96b40"/><rect x="383" y="482" width="4" height="4" fill="#6a3a20"/><rect x="387" y="482" width="44" height="4" fill="#a96b40"/><rect x="383" y="486" width="4" height="4" fill="#6a3a20"/><rect x="387" y="486" width="44" height="4" fill="#a96b40"/><rect x="383" y="490" width="4" height="4" fill="#6a3a20"/><rect x="387" y="490" width="44" height="4" fill="#a96b40"/><rect x="383" y="494" width="4" height="4" fill="#6a3a20"/><rect x="387" y="494" width="44" height="4" fill="#9a6038"/><rect x="383" y="498" width="4" height="4" fill="#6a3a20"/><rect x="387" y="498" width="44" height="4" fill="#a96b40"/></g>
<g><rect x="699" y="394" width="16" height="4" fill="#6a3a20"/><rect x="699" y="398" width="16" height="4" fill="#e6b87c"/><rect x="715" y="398" width="8" height="4" fill="#6a3a20"/><rect x="699" y="402" width="20" height="4" fill="#e6b87c"/><rect x="719" y="402" width="4" height="4" fill="#c89060"/><rect x="723" y="402" width="4" height="4" fill="#6a3a20"/><rect x="699" y="406" width="24" height="4" fill="#e6b87c"/><rect x="723" y="406" width="4" height="4" fill="#c89060"/><rect x="727" y="406" width="4" height="4" fill="#6a3a20"/><rect x="699" y="410" width="24" height="4" fill="#e6b87c"/><rect x="723" y="410" width="8" height="4" fill="#c89060"/><rect x="731" y="410" width="4" height="4" fill="#6a3a20"/><rect x="699" y="414" width="16" height="4" fill="#e6b87c"/><rect x="715" y="414" width="20" height="4" fill="#c89060"/><rect x="735" y="414" width="4" height="4" fill="#6a3a20"/><rect x="699" y="418" width="12" height="4" fill="#f2d088"/><rect x="711" y="418" width="28" height="4" fill="#c89060"/><rect x="739" y="418" width="4" height="4" fill="#6a3a20"/><rect x="699" y="422" width="12" height="4" fill="#7a4628"/><rect x="711" y="422" width="4" height="4" fill="#a96b40"/><rect x="715" y="422" width="24" height="4" fill="#c89060"/><rect x="739" y="422" width="4" height="4" fill="#6a3a20"/><rect x="699" y="426" width="12" height="4" fill="#a96b40"/><rect x="711" y="426" width="8" height="4" fill="#7a4428"/><rect x="719" y="426" width="24" height="4" fill="#c89060"/><rect x="743" y="426" width="4" height="4" fill="#6a3a20"/><rect x="699" y="430" width="20" height="4" fill="#a96b40"/><rect x="719" y="430" width="4" height="4" fill="#7a4428"/><rect x="723" y="430" width="20" height="4" fill="#c89060"/><rect x="743" y="430" width="4" height="4" fill="#6a3a20"/><rect x="699" y="434" width="24" height="4" fill="#a96b40"/><rect x="723" y="434" width="4" height="4" fill="#7a4428"/><rect x="727" y="434" width="20" height="4" fill="#c89060"/><rect x="747" y="434" width="4" height="4" fill="#6a3a20"/><rect x="699" y="438" width="28" height="4" fill="#a96b40"/><rect x="727" y="438" width="4" height="4" fill="#7a4428"/><rect x="731" y="438" width="16" height="4" fill="#c89060"/><rect x="747" y="438" width="4" height="4" fill="#6a3a20"/><rect x="699" y="442" width="32" height="4" fill="#a96b40"/><rect x="731" y="442" width="4" height="4" fill="#7a4428"/><rect x="735" y="442" width="12" height="4" fill="#c89060"/><rect x="747" y="442" width="4" height="4" fill="#6a3a20"/><rect x="699" y="446" width="32" height="4" fill="#a96b40"/><rect x="731" y="446" width="4" height="4" fill="#7a4428"/><rect x="735" y="446" width="12" height="4" fill="#c89060"/><rect x="747" y="446" width="4" height="4" fill="#6a3a20"/><rect x="699" y="450" width="36" height="4" fill="#a96b40"/><rect x="735" y="450" width="4" height="4" fill="#7a4428"/><rect x="739" y="450" width="8" height="4" fill="#c89060"/><rect x="747" y="450" width="4" height="4" fill="#6a3a20"/><rect x="699" y="454" width="36" height="4" fill="#a96b40"/><rect x="735" y="454" width="4" height="4" fill="#7a4428"/><rect x="739" y="454" width="8" height="4" fill="#c89060"/><rect x="747" y="454" width="4" height="4" fill="#6a3a20"/><rect x="699" y="458" width="40" height="4" fill="#a96b40"/><rect x="739" y="458" width="4" height="4" fill="#7a4428"/><rect x="743" y="458" width="4" height="4" fill="#c89060"/><rect x="747" y="458" width="4" height="4" fill="#6a3a20"/><rect x="699" y="462" width="40" height="4" fill="#a96b40"/><rect x="739" y="462" width="4" height="4" fill="#7a4428"/><rect x="743" y="462" width="4" height="4" fill="#c89060"/><rect x="747" y="462" width="4" height="4" fill="#6a3a20"/><rect x="699" y="466" width="44" height="4" fill="#a96b40"/><rect x="743" y="466" width="4" height="4" fill="#c89060"/><rect x="747" y="466" width="4" height="4" fill="#6a3a20"/><rect x="699" y="470" width="48" height="4" fill="#a96b40"/><rect x="747" y="470" width="4" height="4" fill="#6a3a20"/><rect x="699" y="474" width="48" height="4" fill="#a96b40"/><rect x="747" y="474" width="4" height="4" fill="#6a3a20"/><rect x="699" y="478" width="48" height="4" fill="#a96b40"/><rect x="747" y="478" width="4" height="4" fill="#6a3a20"/><rect x="699" y="482" width="48" height="4" fill="#a96b40"/><rect x="747" y="482" width="4" height="4" fill="#6a3a20"/><rect x="699" y="486" width="48" height="4" fill="#a96b40"/><rect x="747" y="486" width="4" height="4" fill="#6a3a20"/><rect x="699" y="490" width="48" height="4" fill="#a96b40"/><rect x="747" y="490" width="4" height="4" fill="#6a3a20"/><rect x="699" y="494" width="48" height="4" fill="#9a6038"/><rect x="747" y="494" width="4" height="4" fill="#6a3a20"/><rect x="699" y="498" width="48" height="4" fill="#a96b40"/><rect x="747" y="498" width="4" height="4" fill="#6a3a20"/></g>
<!-- patches -->
<g fill="#9a5e36">
 <rect x="472" y="470" width="10" height="8"/><rect x="660" y="468" width="14" height="10"/><rect x="585" y="488" width="8" height="6"/>
 <rect x="662" y="430" width="6" height="20"/><rect x="668" y="436" width="6" height="22"/><rect x="674" y="428" width="4" height="12"/>
 <rect x="720" y="450" width="6" height="20"/><rect x="430" y="490" width="8" height="6"/><rect x="600" y="426" width="10" height="6"/>
</g>


<!-- ledge -->
<rect x="379" y="498" width="376" height="4" fill="#6e3e22"/>
<rect x="379" y="502" width="376" height="4" fill="#a87040"/>
<rect x="379" y="506" width="376" height="4" fill="#b07848"/>
<rect x="379" y="510" width="376" height="4" fill="#b87c4c"/>
<rect x="379" y="514" width="376" height="4" fill="#c08454"/>
<rect x="379" y="518" width="376" height="4" fill="#d09860"/>
<rect x="379" y="522" width="376" height="4" fill="#d8a468"/>
<rect x="379" y="526" width="376" height="4" fill="#e0b070"/>
<rect x="379" y="530" width="376" height="4" fill="#f8d888"/>
<rect x="379" y="534" width="376" height="4" fill="#8a5232"/>
<rect x="379" y="538" width="376" height="4" fill="#a86c44"/>
<rect x="379" y="542" width="376" height="4" fill="#a06638"/>
<rect x="379" y="546" width="376" height="4" fill="#6a3a20"/>
<rect x="375" y="502" width="4" height="44" fill="#6a3a20"/><rect x="755" y="502" width="4" height="44" fill="#6a3a20"/>
<rect x="379" y="518" width="4" height="4" fill="#f0c070"/><rect x="379" y="526" width="4" height="4" fill="#f8d080"/><rect x="379" y="530" width="4" height="4" fill="#6a3a20"/>
<rect x="751" y="518" width="4" height="4" fill="#f0c070"/><rect x="751" y="526" width="4" height="4" fill="#f8d080"/><rect x="751" y="530" width="4" height="4" fill="#6a3a20"/>
<!-- bottom -->
<rect x="383" y="550" width="368" height="4" fill="#5a3020"/>
<rect x="383" y="554" width="368" height="4" fill="#8a5234"/>
<rect x="383" y="558" width="368" height="4" fill="#6a3a24"/>
<rect x="383" y="562" width="368" height="4" fill="#8a5838"/>
<rect x="383" y="566" width="368" height="4" fill="#7a4a2a"/>
<rect x="383" y="554" width="4" height="12" fill="#0a0a0a"/><rect x="387" y="566" width="4" height="4" fill="#0a0a0a"/><rect x="391" y="570" width="352" height="4" fill="#0a0a0a"/><rect x="747" y="554" width="4" height="12" fill="#0a0a0a"/><rect x="743" y="566" width="4" height="4" fill="#0a0a0a"/>
<rect x="411" y="550" width="12" height="28" fill="#6a3a20"/><rect x="415" y="554" width="4" height="20" fill="#dcae6c"/>
<rect x="523" y="550" width="12" height="28" fill="#6a3a20"/><rect x="527" y="554" width="4" height="20" fill="#dcae6c"/>
<rect x="599" y="550" width="12" height="28" fill="#6a3a20"/><rect x="603" y="554" width="4" height="20" fill="#dcae6c"/>
<rect x="711" y="550" width="12" height="28" fill="#6a3a20"/><rect x="715" y="554" width="4" height="20" fill="#dcae6c"/>
<rect x="451" y="550" width="24" height="28" fill="#6a3a20"/><rect x="455" y="554" width="16" height="4" fill="#e2b872"/><rect x="455" y="558" width="16" height="16" fill="#8a5634"/><rect x="459" y="562" width="8" height="8" fill="#000"/>
<rect x="659" y="550" width="24" height="28" fill="#6a3a20"/><rect x="663" y="554" width="16" height="4" fill="#e2b872"/><rect x="663" y="558" width="16" height="16" fill="#8a5634"/><rect x="667" y="562" width="8" height="8" fill="#000"/>
<!-- thin pipes on tank -->
<g><rect x="467" y="386" width="16" height="4" fill="#6a3a20"/><rect x="467" y="390" width="4" height="4" fill="#6a3a20"/><rect x="471" y="390" width="12" height="4" fill="#e8c088"/><rect x="483" y="390" width="4" height="4" fill="#6a3a20"/><rect x="467" y="394" width="12" height="4" fill="#6a3a20"/><rect x="479" y="394" width="8" height="4" fill="#e8c088"/><rect x="487" y="394" width="4" height="4" fill="#6a3a20"/><rect x="479" y="398" width="4" height="4" fill="#6a3a20"/><rect x="483" y="398" width="8" height="4" fill="#e8c088"/><rect x="491" y="398" width="4" height="4" fill="#6a3a20"/><rect x="483" y="402" width="4" height="4" fill="#6a3a20"/><rect x="487" y="402" width="8" height="4" fill="#e8c088"/><rect x="495" y="402" width="4" height="4" fill="#6a3a20"/><rect x="487" y="406" width="4" height="4" fill="#6a3a20"/><rect x="491" y="406" width="8" height="4" fill="#e8c088"/><rect x="499" y="406" width="4" height="4" fill="#6a3a20"/><rect x="491" y="410" width="4" height="4" fill="#6a3a20"/><rect x="495" y="410" width="8" height="4" fill="#e8c088"/><rect x="503" y="410" width="4" height="4" fill="#6a3a20"/><rect x="495" y="414" width="4" height="4" fill="#6a3a20"/><rect x="499" y="414" width="4" height="4" fill="#e8c088"/><rect x="503" y="414" width="4" height="4" fill="#6a3a20"/><rect x="495" y="418" width="4" height="4" fill="#6a3a20"/><rect x="499" y="418" width="4" height="4" fill="#e8c088"/><rect x="503" y="418" width="4" height="4" fill="#6a3a20"/><rect x="495" y="422" width="4" height="4" fill="#6a3a20"/><rect x="499" y="422" width="4" height="4" fill="#e8c088"/><rect x="503" y="422" width="4" height="4" fill="#6a3a20"/><rect x="495" y="426" width="4" height="4" fill="#6a3a20"/><rect x="499" y="426" width="4" height="4" fill="#e8c088"/><rect x="503" y="426" width="4" height="4" fill="#6a3a20"/><rect x="491" y="430" width="4" height="4" fill="#6a3a20"/><rect x="495" y="430" width="12" height="4" fill="#e8c088"/><rect x="507" y="430" width="4" height="4" fill="#6a3a20"/><rect x="491" y="434" width="4" height="4" fill="#6a3a20"/><rect x="495" y="434" width="4" height="4" fill="#e8c088"/><rect x="499" y="434" width="4" height="4" fill="#6a3a20"/><rect x="503" y="434" width="4" height="4" fill="#e8c088"/><rect x="507" y="434" width="4" height="4" fill="#6a3a20"/><rect x="491" y="438" width="4" height="4" fill="#6a3a20"/><rect x="495" y="438" width="4" height="4" fill="#e8c088"/><rect x="499" y="438" width="4" height="4" fill="#6a3a20"/><rect x="503" y="438" width="4" height="4" fill="#e8c088"/><rect x="507" y="438" width="4" height="4" fill="#6a3a20"/><rect x="491" y="442" width="20" height="4" fill="#6a3a20"/></g>
<g><rect x="643" y="394" width="8" height="4" fill="#6a3a20"/><rect x="639" y="398" width="4" height="4" fill="#6a3a20"/><rect x="643" y="398" width="8" height="4" fill="#e8c088"/><rect x="651" y="398" width="4" height="4" fill="#6a3a20"/><rect x="635" y="402" width="4" height="4" fill="#6a3a20"/><rect x="639" y="402" width="8" height="4" fill="#e8c088"/><rect x="647" y="402" width="4" height="4" fill="#6a3a20"/><rect x="631" y="406" width="4" height="4" fill="#6a3a20"/><rect x="635" y="406" width="8" height="4" fill="#e8c088"/><rect x="643" y="406" width="4" height="4" fill="#6a3a20"/><rect x="627" y="410" width="4" height="4" fill="#6a3a20"/><rect x="631" y="410" width="8" height="4" fill="#e8c088"/><rect x="639" y="410" width="4" height="4" fill="#6a3a20"/><rect x="627" y="414" width="4" height="4" fill="#6a3a20"/><rect x="631" y="414" width="4" height="4" fill="#e8c088"/><rect x="635" y="414" width="4" height="4" fill="#6a3a20"/><rect x="627" y="418" width="4" height="4" fill="#6a3a20"/><rect x="631" y="418" width="4" height="4" fill="#e8c088"/><rect x="635" y="418" width="4" height="4" fill="#6a3a20"/><rect x="627" y="422" width="4" height="4" fill="#6a3a20"/><rect x="631" y="422" width="4" height="4" fill="#e8c088"/><rect x="635" y="422" width="4" height="4" fill="#6a3a20"/><rect x="627" y="426" width="4" height="4" fill="#6a3a20"/><rect x="631" y="426" width="4" height="4" fill="#e8c088"/><rect x="635" y="426" width="4" height="4" fill="#6a3a20"/><rect x="627" y="430" width="4" height="4" fill="#6a3a20"/><rect x="631" y="430" width="4" height="4" fill="#e8c088"/><rect x="635" y="430" width="4" height="4" fill="#6a3a20"/><rect x="623" y="434" width="4" height="4" fill="#6a3a20"/><rect x="627" y="434" width="12" height="4" fill="#e8c088"/><rect x="639" y="434" width="4" height="4" fill="#6a3a20"/><rect x="623" y="438" width="4" height="4" fill="#6a3a20"/><rect x="627" y="438" width="4" height="4" fill="#e8c088"/><rect x="631" y="438" width="4" height="4" fill="#6a3a20"/><rect x="635" y="438" width="4" height="4" fill="#e8c088"/><rect x="639" y="438" width="4" height="4" fill="#6a3a20"/></g>
<rect x="691" y="414" width="4" height="44" fill="#6a3a20"/><rect x="695" y="414" width="4" height="44" fill="#e8c088"/><rect x="699" y="414" width="4" height="44" fill="#6a3a20"/>
<g><rect x="691" y="458" width="4" height="4" fill="#6a3a20"/><rect x="695" y="458" width="4" height="4" fill="#e8c088"/><rect x="699" y="458" width="4" height="4" fill="#6a3a20"/><rect x="691" y="462" width="12" height="4" fill="#6a3a20"/><rect x="687" y="466" width="4" height="4" fill="#6a3a20"/><rect x="691" y="466" width="4" height="4" fill="#e8c088"/><rect x="695" y="466" width="4" height="4" fill="#c88050"/><rect x="699" y="466" width="4" height="4" fill="#e8c088"/><rect x="703" y="466" width="4" height="4" fill="#6a3a20"/><rect x="687" y="470" width="4" height="4" fill="#6a3a20"/><rect x="691" y="470" width="12" height="4" fill="#e8c088"/><rect x="703" y="470" width="4" height="4" fill="#6a3a20"/><rect x="687" y="474" width="20" height="4" fill="#6a3a20"/><rect x="687" y="478" width="4" height="4" fill="#6a3a20"/><rect x="691" y="478" width="4" height="4" fill="#e8c088"/><rect x="695" y="478" width="4" height="4" fill="#6a3a20"/><rect x="699" y="478" width="4" height="4" fill="#e8c088"/><rect x="703" y="478" width="4" height="4" fill="#6a3a20"/><rect x="687" y="482" width="4" height="4" fill="#6a3a20"/><rect x="691" y="482" width="4" height="4" fill="#e8c088"/><rect x="695" y="482" width="4" height="4" fill="#6a3a20"/><rect x="699" y="482" width="4" height="4" fill="#e8c088"/><rect x="703" y="482" width="4" height="4" fill="#6a3a20"/><rect x="683" y="486" width="4" height="4" fill="#6a3a20"/><rect x="687" y="486" width="4" height="4" fill="#e8c088"/><rect x="691" y="486" width="4" height="4" fill="#6a3a20"/><rect x="695" y="486" width="4" height="4" fill="#a96b40"/><rect x="699" y="486" width="4" height="4" fill="#6a3a20"/><rect x="703" y="486" width="4" height="4" fill="#e8c088"/><rect x="707" y="486" width="4" height="4" fill="#6a3a20"/><rect x="679" y="490" width="4" height="4" fill="#6a3a20"/><rect x="683" y="490" width="4" height="4" fill="#e8c088"/><rect x="687" y="490" width="4" height="4" fill="#6a3a20"/><rect x="703" y="490" width="4" height="4" fill="#6a3a20"/><rect x="707" y="490" width="4" height="4" fill="#e8c088"/><rect x="711" y="490" width="4" height="4" fill="#6a3a20"/><rect x="675" y="494" width="4" height="4" fill="#6a3a20"/><rect x="679" y="494" width="4" height="4" fill="#e8c088"/><rect x="683" y="494" width="4" height="4" fill="#6a3a20"/><rect x="687" y="494" width="20" height="4" fill="#b87848"/><rect x="707" y="494" width="4" height="4" fill="#6a3a20"/><rect x="711" y="494" width="4" height="4" fill="#e8c088"/><rect x="715" y="494" width="4" height="4" fill="#6a3a20"/></g>
<g><rect x="427" y="478" width="4" height="4" fill="#6a3a20"/><rect x="431" y="478" width="4" height="4" fill="#e8c088"/><rect x="435" y="478" width="4" height="4" fill="#6a3a20"/><rect x="439" y="478" width="4" height="4" fill="#e8c088"/><rect x="443" y="478" width="4" height="4" fill="#6a3a20"/><rect x="427" y="482" width="4" height="4" fill="#6a3a20"/><rect x="431" y="482" width="4" height="4" fill="#e8c088"/><rect x="435" y="482" width="4" height="4" fill="#6a3a20"/><rect x="439" y="482" width="4" height="4" fill="#e8c088"/><rect x="443" y="482" width="4" height="4" fill="#6a3a20"/><rect x="423" y="486" width="4" height="4" fill="#6a3a20"/><rect x="427" y="486" width="4" height="4" fill="#e8c088"/><rect x="431" y="486" width="4" height="4" fill="#6a3a20"/><rect x="435" y="486" width="4" height="4" fill="#a96b40"/><rect x="439" y="486" width="4" height="4" fill="#6a3a20"/><rect x="443" y="486" width="4" height="4" fill="#e8c088"/><rect x="447" y="486" width="4" height="4" fill="#6a3a20"/><rect x="419" y="490" width="4" height="4" fill="#6a3a20"/><rect x="423" y="490" width="4" height="4" fill="#e8c088"/><rect x="427" y="490" width="4" height="4" fill="#6a3a20"/><rect x="431" y="490" width="12" height="4" fill="#a96b40"/><rect x="443" y="490" width="4" height="4" fill="#6a3a20"/><rect x="447" y="490" width="4" height="4" fill="#e8c088"/><rect x="451" y="490" width="4" height="4" fill="#6a3a20"/><rect x="415" y="494" width="4" height="4" fill="#6a3a20"/><rect x="419" y="494" width="4" height="4" fill="#e8c088"/><rect x="423" y="494" width="4" height="4" fill="#6a3a20"/><rect x="427" y="494" width="20" height="4" fill="#b87848"/><rect x="447" y="494" width="4" height="4" fill="#6a3a20"/><rect x="451" y="494" width="4" height="4" fill="#e8c088"/><rect x="455" y="494" width="4" height="4" fill="#6a3a20"/></g>
<!-- cylinder -->
<g><rect x="651" y="338" width="48" height="4" fill="#6a3020"/><rect x="647" y="342" width="4" height="4" fill="#6a3020"/><rect x="651" y="342" width="48" height="4" fill="#c8905a"/><rect x="699" y="342" width="4" height="4" fill="#6a3020"/><rect x="647" y="346" width="4" height="4" fill="#6a3020"/><rect x="651" y="346" width="48" height="4" fill="#e0b070"/><rect x="699" y="346" width="4" height="4" fill="#6a3020"/><rect x="647" y="350" width="4" height="4" fill="#6a3020"/><rect x="651" y="350" width="48" height="4" fill="#f8d888"/><rect x="699" y="350" width="4" height="4" fill="#6a3020"/><rect x="647" y="354" width="4" height="4" fill="#6a3020"/><rect x="651" y="354" width="48" height="4" fill="#f8d888"/><rect x="699" y="354" width="4" height="4" fill="#6a3020"/><rect x="647" y="358" width="4" height="4" fill="#6a3020"/><rect x="651" y="358" width="48" height="4" fill="#e8c080"/><rect x="699" y="358" width="4" height="4" fill="#6a3020"/><rect x="647" y="362" width="4" height="4" fill="#6a3020"/><rect x="651" y="362" width="48" height="4" fill="#d0a068"/><rect x="699" y="362" width="4" height="4" fill="#6a3020"/><rect x="647" y="366" width="4" height="4" fill="#6a3020"/><rect x="651" y="366" width="48" height="4" fill="#b8804e"/><rect x="699" y="366" width="4" height="4" fill="#6a3020"/><rect x="647" y="370" width="4" height="4" fill="#6a3020"/><rect x="651" y="370" width="48" height="4" fill="#a87040"/><rect x="699" y="370" width="4" height="4" fill="#6a3020"/><rect x="647" y="374" width="4" height="4" fill="#6a3020"/><rect x="651" y="374" width="48" height="4" fill="#8a5030"/><rect x="699" y="374" width="4" height="4" fill="#6a3020"/><rect x="647" y="378" width="4" height="4" fill="#6a3020"/><rect x="651" y="378" width="48" height="4" fill="#b07848"/><rect x="699" y="378" width="4" height="4" fill="#6a3020"/><rect x="647" y="382" width="4" height="4" fill="#6a3020"/><rect x="651" y="382" width="48" height="4" fill="#c8905a"/><rect x="699" y="382" width="4" height="4" fill="#6a3020"/><rect x="647" y="386" width="56" height="4" fill="#6a3020"/><rect x="647" y="390" width="4" height="4" fill="#6a3020"/><rect x="651" y="390" width="4" height="4" fill="#c89868"/><rect x="655" y="390" width="4" height="4" fill="#6a3020"/><rect x="659" y="390" width="4" height="4" fill="#c89868"/><rect x="663" y="390" width="4" height="4" fill="#6a3020"/><rect x="667" y="390" width="4" height="4" fill="#c89868"/><rect x="671" y="390" width="8" height="4" fill="#6a3020"/><rect x="679" y="390" width="4" height="4" fill="#c89868"/><rect x="683" y="390" width="4" height="4" fill="#6a3020"/><rect x="687" y="390" width="4" height="4" fill="#c89868"/><rect x="691" y="390" width="4" height="4" fill="#6a3020"/><rect x="695" y="390" width="4" height="4" fill="#c89868"/><rect x="699" y="390" width="4" height="4" fill="#6a3020"/><rect x="647" y="394" width="4" height="4" fill="#6a3020"/><rect x="651" y="394" width="4" height="4" fill="#c89868"/><rect x="655" y="394" width="4" height="4" fill="#6a3020"/><rect x="659" y="394" width="4" height="4" fill="#c89868"/><rect x="663" y="394" width="4" height="4" fill="#6a3020"/><rect x="667" y="394" width="4" height="4" fill="#c89868"/><rect x="671" y="394" width="8" height="4" fill="#6a3020"/><rect x="679" y="394" width="4" height="4" fill="#c89868"/><rect x="683" y="394" width="4" height="4" fill="#6a3020"/><rect x="687" y="394" width="4" height="4" fill="#c89868"/><rect x="691" y="394" width="4" height="4" fill="#6a3020"/><rect x="695" y="394" width="4" height="4" fill="#c89868"/><rect x="699" y="394" width="4" height="4" fill="#6a3020"/><rect x="647" y="398" width="4" height="4" fill="#6a3020"/><rect x="651" y="398" width="4" height="4" fill="#9a6a44"/><rect x="655" y="398" width="4" height="4" fill="#6a3020"/><rect x="659" y="398" width="4" height="4" fill="#9a6a44"/><rect x="663" y="398" width="4" height="4" fill="#6a3020"/><rect x="667" y="398" width="4" height="4" fill="#9a6a44"/><rect x="671" y="398" width="8" height="4" fill="#6a3020"/><rect x="679" y="398" width="4" height="4" fill="#9a6a44"/><rect x="683" y="398" width="4" height="4" fill="#6a3020"/><rect x="687" y="398" width="4" height="4" fill="#9a6a44"/><rect x="691" y="398" width="4" height="4" fill="#6a3020"/><rect x="695" y="398" width="4" height="4" fill="#9a6a44"/><rect x="699" y="398" width="4" height="4" fill="#6a3020"/><rect x="647" y="402" width="56" height="4" fill="#6a3020"/><rect x="651" y="406" width="48" height="4" fill="#3e1810"/><rect x="655" y="410" width="40" height="4" fill="#3e1810"/></g>
<!-- goggles valve -->
<g><rect x="559" y="366" width="16" height="4" fill="#4a2410"/><rect x="607" y="366" width="16" height="4" fill="#4a2410"/><rect x="555" y="370" width="4" height="4" fill="#4a2410"/><rect x="559" y="370" width="16" height="4" fill="#c49a66"/><rect x="575" y="370" width="8" height="4" fill="#4a2410"/><rect x="587" y="370" width="8" height="4" fill="#4a2410"/><rect x="599" y="370" width="8" height="4" fill="#4a2410"/><rect x="607" y="370" width="16" height="4" fill="#c49a66"/><rect x="623" y="370" width="4" height="4" fill="#4a2410"/><rect x="551" y="374" width="4" height="4" fill="#4a2410"/><rect x="555" y="374" width="28" height="4" fill="#c49a66"/><rect x="583" y="374" width="4" height="4" fill="#4a2410"/><rect x="587" y="374" width="8" height="4" fill="#c49a66"/><rect x="595" y="374" width="4" height="4" fill="#4a2410"/><rect x="599" y="374" width="28" height="4" fill="#c49a66"/><rect x="627" y="374" width="4" height="4" fill="#4a2410"/><rect x="551" y="378" width="4" height="4" fill="#4a2410"/><rect x="555" y="378" width="8" height="4" fill="#c49a66"/><rect x="563" y="378" width="12" height="4" fill="#eed08a"/><rect x="575" y="378" width="8" height="4" fill="#c49a66"/><rect x="583" y="378" width="4" height="4" fill="#4a2410"/><rect x="587" y="378" width="8" height="4" fill="#eed08a"/><rect x="595" y="378" width="4" height="4" fill="#4a2410"/><rect x="599" y="378" width="8" height="4" fill="#c49a66"/><rect x="607" y="378" width="12" height="4" fill="#eed08a"/><rect x="619" y="378" width="8" height="4" fill="#c49a66"/><rect x="627" y="378" width="4" height="4" fill="#4a2410"/><rect x="551" y="382" width="4" height="4" fill="#4a2410"/><rect x="555" y="382" width="4" height="4" fill="#c49a66"/><rect x="559" y="382" width="20" height="4" fill="#4a2410"/><rect x="579" y="382" width="8" height="4" fill="#c49a66"/><rect x="587" y="382" width="8" height="4" fill="#eed08a"/><rect x="595" y="382" width="8" height="4" fill="#c49a66"/><rect x="603" y="382" width="20" height="4" fill="#4a2410"/><rect x="623" y="382" width="4" height="4" fill="#c49a66"/><rect x="627" y="382" width="4" height="4" fill="#4a2410"/><rect x="551" y="386" width="4" height="4" fill="#4a2410"/><rect x="555" y="386" width="4" height="4" fill="#c49a66"/><rect x="559" y="386" width="4" height="4" fill="#4a2410"/><rect x="563" y="386" width="4" height="4" fill="#8a6448"/><rect x="567" y="386" width="8" height="4" fill="#4a2410"/><rect x="575" y="386" width="4" height="4" fill="#8a6448"/><rect x="579" y="386" width="4" height="4" fill="#4a2410"/><rect x="583" y="386" width="4" height="4" fill="#c49a66"/><rect x="587" y="386" width="8" height="4" fill="#8a6448"/><rect x="595" y="386" width="4" height="4" fill="#c49a66"/><rect x="599" y="386" width="4" height="4" fill="#4a2410"/><rect x="603" y="386" width="4" height="4" fill="#8a6448"/><rect x="607" y="386" width="8" height="4" fill="#4a2410"/><rect x="615" y="386" width="4" height="4" fill="#8a6448"/><rect x="619" y="386" width="4" height="4" fill="#4a2410"/><rect x="623" y="386" width="4" height="4" fill="#c49a66"/><rect x="627" y="386" width="4" height="4" fill="#4a2410"/><rect x="551" y="390" width="4" height="4" fill="#4a2410"/><rect x="555" y="390" width="4" height="4" fill="#c49a66"/><rect x="559" y="390" width="8" height="4" fill="#4a2410"/><rect x="567" y="390" width="8" height="4" fill="#8a6448"/><rect x="575" y="390" width="8" height="4" fill="#4a2410"/><rect x="583" y="390" width="4" height="4" fill="#c49a66"/><rect x="587" y="390" width="8" height="4" fill="#8a6448"/><rect x="595" y="390" width="4" height="4" fill="#c49a66"/><rect x="599" y="390" width="8" height="4" fill="#4a2410"/><rect x="607" y="390" width="8" height="4" fill="#8a6448"/><rect x="615" y="390" width="8" height="4" fill="#4a2410"/><rect x="623" y="390" width="4" height="4" fill="#c49a66"/><rect x="627" y="390" width="4" height="4" fill="#4a2410"/><rect x="551" y="394" width="4" height="4" fill="#4a2410"/><rect x="555" y="394" width="8" height="4" fill="#c49a66"/><rect x="563" y="394" width="20" height="4" fill="#4a2410"/><rect x="583" y="394" width="16" height="4" fill="#c49a66"/><rect x="599" y="394" width="20" height="4" fill="#4a2410"/><rect x="619" y="394" width="8" height="4" fill="#c49a66"/><rect x="627" y="394" width="4" height="4" fill="#4a2410"/><rect x="555" y="398" width="4" height="4" fill="#4a2410"/><rect x="559" y="398" width="4" height="4" fill="#c49a66"/><rect x="563" y="398" width="20" height="4" fill="#7a4a48"/><rect x="583" y="398" width="4" height="4" fill="#c49a66"/><rect x="587" y="398" width="8" height="4" fill="#7a4a48"/><rect x="595" y="398" width="4" height="4" fill="#c49a66"/><rect x="599" y="398" width="20" height="4" fill="#7a4a48"/><rect x="619" y="398" width="4" height="4" fill="#c49a66"/><rect x="623" y="398" width="4" height="4" fill="#4a2410"/><rect x="559" y="402" width="4" height="4" fill="#4a2410"/><rect x="563" y="402" width="20" height="4" fill="#c49a66"/><rect x="583" y="402" width="4" height="4" fill="#7a4a48"/><rect x="587" y="402" width="8" height="4" fill="#c49a66"/><rect x="595" y="402" width="4" height="4" fill="#7a4a48"/><rect x="599" y="402" width="20" height="4" fill="#c49a66"/><rect x="619" y="402" width="4" height="4" fill="#4a2410"/><rect x="563" y="406" width="20" height="4" fill="#4a2410"/><rect x="583" y="406" width="16" height="4" fill="#7a4a48"/><rect x="599" y="406" width="20" height="4" fill="#4a2410"/><rect x="567" y="410" width="4" height="4" fill="#4a2410"/><rect x="571" y="410" width="8" height="4" fill="#c49a66"/><rect x="579" y="410" width="4" height="4" fill="#7a4a48"/><rect x="583" y="410" width="16" height="4" fill="#4a2410"/><rect x="599" y="410" width="4" height="4" fill="#7a4a48"/><rect x="603" y="410" width="8" height="4" fill="#c49a66"/><rect x="611" y="410" width="4" height="4" fill="#4a2410"/><rect x="571" y="414" width="4" height="4" fill="#4a2410"/><rect x="575" y="414" width="36" height="4" fill="#c49a66"/><rect x="611" y="414" width="4" height="4" fill="#4a2410"/><rect x="575" y="418" width="36" height="4" fill="#4a2410"/></g>
<!-- top pipe system -->
<rect x="475" y="330" width="88" height="4" fill="#6a3a1a"/><rect x="475" y="334" width="88" height="4" fill="#f0d060"/><rect x="475" y="338" width="88" height="4" fill="#e0b850"/><rect x="475" y="342" width="88" height="4" fill="#6a3a1a"/>
<rect x="431" y="358" width="4" height="60" fill="#6a3a1a"/><rect x="435" y="358" width="4" height="60" fill="#f0d060"/><rect x="439" y="358" width="4" height="60" fill="#e0b050"/><rect x="443" y="358" width="4" height="60" fill="#6a3a1a"/>
<g><rect x="435" y="326" width="40" height="4" fill="#6a3a1a"/><rect x="431" y="330" width="4" height="4" fill="#6a3a1a"/><rect x="435" y="330" width="8" height="4" fill="#f8e890"/><rect x="443" y="330" width="4" height="4" fill="#e8c060"/><rect x="447" y="330" width="4" height="4" fill="#d8b060"/><rect x="451" y="330" width="4" height="4" fill="#6a3a1a"/><rect x="455" y="330" width="8" height="4" fill="#f0c858"/><rect x="463" y="330" width="4" height="4" fill="#6a3a1a"/><rect x="467" y="330" width="4" height="4" fill="#f0c870"/><rect x="471" y="330" width="4" height="4" fill="#6a3a1a"/><rect x="427" y="334" width="4" height="4" fill="#6a3a1a"/><rect x="431" y="334" width="4" height="4" fill="#e0b050"/><rect x="435" y="334" width="8" height="4" fill="#fff0a8"/><rect x="443" y="334" width="4" height="4" fill="#e8c060"/><rect x="447" y="334" width="4" height="4" fill="#d8b060"/><rect x="451" y="334" width="4" height="4" fill="#6a3a1a"/><rect x="455" y="334" width="8" height="4" fill="#d8a850"/><rect x="463" y="334" width="4" height="4" fill="#6a3a1a"/><rect x="467" y="334" width="4" height="4" fill="#d8a060"/><rect x="471" y="334" width="4" height="4" fill="#6a3a1a"/><rect x="427" y="338" width="4" height="4" fill="#6a3a1a"/><rect x="431" y="338" width="4" height="4" fill="#e0b050"/><rect x="435" y="338" width="8" height="4" fill="#f0d060"/><rect x="443" y="338" width="8" height="4" fill="#d8b060"/><rect x="451" y="338" width="4" height="4" fill="#6a3a1a"/><rect x="455" y="338" width="8" height="4" fill="#c89850"/><rect x="463" y="338" width="4" height="4" fill="#6a3a1a"/><rect x="467" y="338" width="4" height="4" fill="#c89850"/><rect x="471" y="338" width="4" height="4" fill="#6a3a1a"/><rect x="427" y="342" width="4" height="4" fill="#6a3a1a"/><rect x="431" y="342" width="20" height="4" fill="#c89848"/><rect x="451" y="342" width="4" height="4" fill="#6a3a1a"/><rect x="455" y="342" width="8" height="4" fill="#e8c078"/><rect x="463" y="342" width="4" height="4" fill="#6a3a1a"/><rect x="467" y="342" width="4" height="4" fill="#e8c078"/><rect x="471" y="342" width="4" height="4" fill="#6a3a1a"/><rect x="427" y="346" width="4" height="4" fill="#6a3a1a"/><rect x="431" y="346" width="16" height="4" fill="#c09040"/><rect x="447" y="346" width="28" height="4" fill="#6a3a1a"/><rect x="427" y="350" width="4" height="4" fill="#6a3a1a"/><rect x="431" y="350" width="16" height="4" fill="#8a5a28"/><rect x="447" y="350" width="4" height="4" fill="#6a3a1a"/><rect x="427" y="354" width="4" height="4" fill="#6a3a1a"/><rect x="431" y="354" width="16" height="4" fill="#d8a858"/><rect x="447" y="354" width="4" height="4" fill="#6a3a1a"/><rect x="431" y="358" width="4" height="4" fill="#6a3a1a"/><rect x="435" y="358" width="4" height="4" fill="#f0d060"/><rect x="439" y="358" width="4" height="4" fill="#e0b050"/><rect x="443" y="358" width="4" height="4" fill="#6a3a1a"/></g>
<g><rect x="567" y="326" width="40" height="4" fill="#6a3a1a"/><rect x="563" y="330" width="8" height="4" fill="#6a3a1a"/><rect x="571" y="330" width="4" height="4" fill="#f0c870"/><rect x="575" y="330" width="4" height="4" fill="#6a3a1a"/><rect x="579" y="330" width="8" height="4" fill="#f0c858"/><rect x="587" y="330" width="4" height="4" fill="#6a3a1a"/><rect x="591" y="330" width="8" height="4" fill="#e8c060"/><rect x="599" y="330" width="8" height="4" fill="#f8e890"/><rect x="607" y="330" width="4" height="4" fill="#6a3a1a"/><rect x="563" y="334" width="4" height="4" fill="#f0d060"/><rect x="567" y="334" width="4" height="4" fill="#6a3a1a"/><rect x="571" y="334" width="4" height="4" fill="#d8a060"/><rect x="575" y="334" width="4" height="4" fill="#6a3a1a"/><rect x="579" y="334" width="8" height="4" fill="#d8a850"/><rect x="587" y="334" width="4" height="4" fill="#6a3a1a"/><rect x="591" y="334" width="4" height="4" fill="#d8b060"/><rect x="595" y="334" width="4" height="4" fill="#e8c060"/><rect x="599" y="334" width="8" height="4" fill="#f8e890"/><rect x="607" y="334" width="4" height="4" fill="#e0b050"/><rect x="611" y="334" width="4" height="4" fill="#6a3a1a"/><rect x="563" y="338" width="4" height="4" fill="#e8c060"/><rect x="567" y="338" width="4" height="4" fill="#6a3a1a"/><rect x="571" y="338" width="4" height="4" fill="#c89850"/><rect x="575" y="338" width="4" height="4" fill="#6a3a1a"/><rect x="579" y="338" width="8" height="4" fill="#c89850"/><rect x="587" y="338" width="4" height="4" fill="#6a3a1a"/><rect x="591" y="338" width="8" height="4" fill="#d8b060"/><rect x="599" y="338" width="8" height="4" fill="#f0d060"/><rect x="607" y="338" width="4" height="4" fill="#e0b050"/><rect x="611" y="338" width="4" height="4" fill="#6a3a1a"/><rect x="563" y="342" width="8" height="4" fill="#6a3a1a"/><rect x="571" y="342" width="4" height="4" fill="#e8c078"/><rect x="575" y="342" width="4" height="4" fill="#6a3a1a"/><rect x="579" y="342" width="8" height="4" fill="#e8c078"/><rect x="587" y="342" width="4" height="4" fill="#6a3a1a"/><rect x="591" y="342" width="20" height="4" fill="#c89848"/><rect x="611" y="342" width="4" height="4" fill="#6a3a1a"/><rect x="567" y="346" width="28" height="4" fill="#6a3a1a"/><rect x="595" y="346" width="16" height="4" fill="#c09040"/><rect x="611" y="346" width="4" height="4" fill="#6a3a1a"/><rect x="591" y="350" width="4" height="4" fill="#6a3a1a"/><rect x="595" y="350" width="16" height="4" fill="#8a5a28"/><rect x="611" y="350" width="4" height="4" fill="#6a3a1a"/><rect x="591" y="354" width="4" height="4" fill="#6a3a1a"/><rect x="595" y="354" width="16" height="4" fill="#d8a858"/><rect x="611" y="354" width="4" height="4" fill="#6a3a1a"/><rect x="595" y="358" width="16" height="4" fill="#6a3a1a"/></g>
<!-- middle pipe -->
<rect x="459" y="442" width="128" height="4" fill="#6a3a1a"/><rect x="459" y="446" width="128" height="4" fill="#f0d060"/><rect x="459" y="450" width="128" height="4" fill="#e0b850"/><rect x="459" y="454" width="128" height="4" fill="#6a3a1a"/>
<g><rect x="595" y="438" width="40" height="4" fill="#6a3a1a"/><rect x="587" y="442" width="12" height="4" fill="#6a3a1a"/><rect x="599" y="442" width="4" height="4" fill="#f0c870"/><rect x="603" y="442" width="4" height="4" fill="#6a3a1a"/><rect x="607" y="442" width="8" height="4" fill="#f0c858"/><rect x="615" y="442" width="4" height="4" fill="#6a3a1a"/><rect x="619" y="442" width="8" height="4" fill="#e8c060"/><rect x="627" y="442" width="8" height="4" fill="#f8e890"/><rect x="635" y="442" width="4" height="4" fill="#6a3a1a"/><rect x="587" y="446" width="8" height="4" fill="#f0d060"/><rect x="595" y="446" width="4" height="4" fill="#6a3a1a"/><rect x="599" y="446" width="4" height="4" fill="#d8a060"/><rect x="603" y="446" width="4" height="4" fill="#6a3a1a"/><rect x="607" y="446" width="8" height="4" fill="#d8a850"/><rect x="615" y="446" width="4" height="4" fill="#6a3a1a"/><rect x="619" y="446" width="4" height="4" fill="#d8b060"/><rect x="623" y="446" width="4" height="4" fill="#e8c060"/><rect x="627" y="446" width="8" height="4" fill="#f8e890"/><rect x="635" y="446" width="4" height="4" fill="#e0b050"/><rect x="639" y="446" width="4" height="4" fill="#6a3a1a"/><rect x="587" y="450" width="8" height="4" fill="#e8c060"/><rect x="595" y="450" width="4" height="4" fill="#6a3a1a"/><rect x="599" y="450" width="4" height="4" fill="#c89850"/><rect x="603" y="450" width="4" height="4" fill="#6a3a1a"/><rect x="607" y="450" width="8" height="4" fill="#c89850"/><rect x="615" y="450" width="4" height="4" fill="#6a3a1a"/><rect x="619" y="450" width="8" height="4" fill="#d8b060"/><rect x="627" y="450" width="8" height="4" fill="#f0d060"/><rect x="635" y="450" width="4" height="4" fill="#e0b050"/><rect x="639" y="450" width="4" height="4" fill="#6a3a1a"/><rect x="587" y="454" width="12" height="4" fill="#6a3a1a"/><rect x="599" y="454" width="4" height="4" fill="#e8c078"/><rect x="603" y="454" width="4" height="4" fill="#6a3a1a"/><rect x="607" y="454" width="8" height="4" fill="#e8c078"/><rect x="615" y="454" width="4" height="4" fill="#6a3a1a"/><rect x="619" y="454" width="20" height="4" fill="#c89848"/><rect x="639" y="454" width="4" height="4" fill="#6a3a1a"/><rect x="595" y="458" width="28" height="4" fill="#6a3a1a"/><rect x="623" y="458" width="16" height="4" fill="#c09040"/><rect x="639" y="458" width="4" height="4" fill="#6a3a1a"/><rect x="619" y="462" width="4" height="4" fill="#6a3a1a"/><rect x="623" y="462" width="16" height="4" fill="#8a5a28"/><rect x="639" y="462" width="4" height="4" fill="#6a3a1a"/><rect x="619" y="466" width="4" height="4" fill="#6a3a1a"/><rect x="623" y="466" width="16" height="4" fill="#d8a858"/><rect x="639" y="466" width="4" height="4" fill="#6a3a1a"/><rect x="623" y="470" width="16" height="4" fill="#6a3a1a"/></g>
<rect x="627" y="474" width="4" height="27" fill="#6a3a1a"/><rect x="631" y="474" width="4" height="27" fill="#e8b878"/><rect x="635" y="474" width="4" height="27" fill="#6a3a1a"/>
<!-- red gauge -->
<g><rect x="419" y="414" width="24" height="4" fill="#5a1a10"/><rect x="411" y="418" width="8" height="4" fill="#5a1a10"/><rect x="419" y="418" width="24" height="4" fill="#b84a40"/><rect x="443" y="418" width="8" height="4" fill="#5a1a10"/><rect x="407" y="422" width="4" height="4" fill="#5a1a10"/><rect x="411" y="422" width="8" height="4" fill="#c86450"/><rect x="419" y="422" width="24" height="4" fill="#d87a5e"/><rect x="443" y="422" width="8" height="4" fill="#c86450"/><rect x="451" y="422" width="4" height="4" fill="#5a1a10"/><rect x="403" y="426" width="4" height="4" fill="#5a1a10"/><rect x="407" y="426" width="4" height="4" fill="#c86450"/><rect x="411" y="426" width="8" height="4" fill="#d87a5e"/><rect x="419" y="426" width="24" height="4" fill="#eca07c"/><rect x="443" y="426" width="8" height="4" fill="#d87a5e"/><rect x="451" y="426" width="4" height="4" fill="#c86450"/><rect x="455" y="426" width="4" height="4" fill="#5a1a10"/><rect x="403" y="430" width="4" height="4" fill="#5a1a10"/><rect x="407" y="430" width="4" height="4" fill="#c86450"/><rect x="411" y="430" width="4" height="4" fill="#d87a5e"/><rect x="415" y="430" width="4" height="4" fill="#5a1a10"/><rect x="419" y="430" width="24" height="4" fill="#3e0c08"/><rect x="443" y="430" width="4" height="4" fill="#5a1a10"/><rect x="447" y="430" width="4" height="4" fill="#d87a5e"/><rect x="451" y="430" width="4" height="4" fill="#c86450"/><rect x="455" y="430" width="4" height="4" fill="#5a1a10"/><rect x="399" y="434" width="4" height="4" fill="#5a1a10"/><rect x="403" y="434" width="4" height="4" fill="#c86450"/><rect x="407" y="434" width="4" height="4" fill="#d87a5e"/><rect x="411" y="434" width="16" height="4" fill="#3e0c08"/><rect x="427" y="434" width="8" height="4" fill="#8a3030"/><rect x="435" y="434" width="12" height="4" fill="#3e0c08"/><rect x="447" y="434" width="4" height="4" fill="#d87a5e"/><rect x="451" y="434" width="4" height="4" fill="#c86450"/><rect x="455" y="434" width="4" height="4" fill="#5a1a10"/><rect x="399" y="438" width="4" height="4" fill="#5a1a10"/><rect x="403" y="438" width="4" height="4" fill="#d87a5e"/><rect x="407" y="438" width="4" height="4" fill="#c86450"/><rect x="411" y="438" width="4" height="4" fill="#3e0c08"/><rect x="415" y="438" width="8" height="4" fill="#8a6a50"/><rect x="423" y="438" width="4" height="4" fill="#3e0c08"/><rect x="427" y="438" width="8" height="4" fill="#b84a40"/><rect x="435" y="438" width="4" height="4" fill="#3e0c08"/><rect x="439" y="438" width="8" height="4" fill="#8a6a50"/><rect x="447" y="438" width="4" height="4" fill="#3e0c08"/><rect x="451" y="438" width="4" height="4" fill="#d87a5e"/><rect x="455" y="438" width="4" height="4" fill="#5a1a10"/><rect x="399" y="442" width="4" height="4" fill="#5a1a10"/><rect x="403" y="442" width="4" height="4" fill="#d87a5e"/><rect x="407" y="442" width="4" height="4" fill="#c86450"/><rect x="411" y="442" width="16" height="4" fill="#3e0c08"/><rect x="427" y="442" width="8" height="4" fill="#b84a40"/><rect x="435" y="442" width="16" height="4" fill="#3e0c08"/><rect x="451" y="442" width="4" height="4" fill="#d87a5e"/><rect x="455" y="442" width="4" height="4" fill="#5a1a10"/><rect x="399" y="446" width="4" height="4" fill="#5a1a10"/><rect x="403" y="446" width="4" height="4" fill="#d87a5e"/><rect x="407" y="446" width="4" height="4" fill="#3e0c08"/><rect x="411" y="446" width="12" height="4" fill="#d8846e"/><rect x="423" y="446" width="4" height="4" fill="#a04848"/><rect x="427" y="446" width="8" height="4" fill="#d8846e"/><rect x="435" y="446" width="4" height="4" fill="#a04848"/><rect x="439" y="446" width="12" height="4" fill="#d8846e"/><rect x="451" y="446" width="4" height="4" fill="#d87a5e"/><rect x="455" y="446" width="4" height="4" fill="#5a1a10"/><rect x="399" y="450" width="4" height="4" fill="#5a1a10"/><rect x="403" y="450" width="4" height="4" fill="#c86450"/><rect x="407" y="450" width="4" height="4" fill="#3e0c08"/><rect x="411" y="450" width="36" height="4" fill="#b84a40"/><rect x="447" y="450" width="4" height="4" fill="#3e0c08"/><rect x="451" y="450" width="4" height="4" fill="#c86450"/><rect x="455" y="450" width="4" height="4" fill="#5a1a10"/><rect x="399" y="454" width="4" height="4" fill="#5a1a10"/><rect x="403" y="454" width="4" height="4" fill="#c86450"/><rect x="407" y="454" width="44" height="4" fill="#3e0c08"/><rect x="451" y="454" width="4" height="4" fill="#c86450"/><rect x="455" y="454" width="4" height="4" fill="#5a1a10"/><rect x="403" y="458" width="4" height="4" fill="#5a1a10"/><rect x="407" y="458" width="4" height="4" fill="#c86450"/><rect x="411" y="458" width="4" height="4" fill="#3e0c08"/><rect x="415" y="458" width="4" height="4" fill="#8a6a50"/><rect x="419" y="458" width="8" height="4" fill="#3e0c08"/><rect x="427" y="458" width="8" height="4" fill="#8a3030"/><rect x="435" y="458" width="8" height="4" fill="#3e0c08"/><rect x="443" y="458" width="4" height="4" fill="#8a6a50"/><rect x="447" y="458" width="4" height="4" fill="#3e0c08"/><rect x="451" y="458" width="4" height="4" fill="#c86450"/><rect x="455" y="458" width="4" height="4" fill="#5a1a10"/><rect x="403" y="462" width="4" height="4" fill="#5a1a10"/><rect x="407" y="462" width="8" height="4" fill="#c86450"/><rect x="415" y="462" width="28" height="4" fill="#3e0c08"/><rect x="443" y="462" width="8" height="4" fill="#c86450"/><rect x="451" y="462" width="4" height="4" fill="#5a1a10"/><rect x="407" y="466" width="4" height="4" fill="#5a1a10"/><rect x="411" y="466" width="4" height="4" fill="#c86450"/><rect x="415" y="466" width="32" height="4" fill="#3e0c08"/><rect x="447" y="466" width="4" height="4" fill="#c86450"/><rect x="451" y="466" width="4" height="4" fill="#5a1a10"/><rect x="411" y="470" width="8" height="4" fill="#5a1a10"/><rect x="419" y="470" width="24" height="4" fill="#b84a40"/><rect x="443" y="470" width="8" height="4" fill="#5a1a10"/><rect x="419" y="474" width="24" height="4" fill="#5a1a10"/></g>
<!-- big gauge -->
<g><rect x="515" y="430" width="36" height="4" fill="#4a2810"/><rect x="503" y="434" width="12" height="4" fill="#4a2810"/><rect x="515" y="434" width="36" height="4" fill="#f4dc8a"/><rect x="551" y="434" width="8" height="4" fill="#4a2810"/><rect x="499" y="438" width="4" height="4" fill="#4a2810"/><rect x="503" y="438" width="8" height="4" fill="#d8b060"/><rect x="511" y="438" width="44" height="4" fill="#f4dc8a"/><rect x="555" y="438" width="4" height="4" fill="#d8b060"/><rect x="559" y="438" width="4" height="4" fill="#4a2810"/><rect x="495" y="442" width="4" height="4" fill="#4a2810"/><rect x="499" y="442" width="4" height="4" fill="#d8b060"/><rect x="503" y="442" width="8" height="4" fill="#f4dc8a"/><rect x="511" y="442" width="44" height="4" fill="#4a2810"/><rect x="555" y="442" width="8" height="4" fill="#f4dc8a"/><rect x="563" y="442" width="4" height="4" fill="#d8b060"/><rect x="567" y="442" width="4" height="4" fill="#4a2810"/><rect x="495" y="446" width="4" height="4" fill="#4a2810"/><rect x="499" y="446" width="4" height="4" fill="#d8b060"/><rect x="503" y="446" width="4" height="4" fill="#f4dc8a"/><rect x="507" y="446" width="4" height="4" fill="#4a2810"/><rect x="511" y="446" width="4" height="4" fill="#4e2c12"/><rect x="515" y="446" width="4" height="4" fill="#7a5424"/><rect x="519" y="446" width="4" height="4" fill="#4e2c12"/><rect x="523" y="446" width="4" height="4" fill="#d0a868"/><rect x="527" y="446" width="4" height="4" fill="#4e2c12"/><rect x="531" y="446" width="4" height="4" fill="#7a5424"/><rect x="535" y="446" width="4" height="4" fill="#d0a868"/><rect x="539" y="446" width="4" height="4" fill="#4e2c12"/><rect x="543" y="446" width="4" height="4" fill="#7a5424"/><rect x="547" y="446" width="8" height="4" fill="#4e2c12"/><rect x="555" y="446" width="4" height="4" fill="#4a2810"/><rect x="559" y="446" width="4" height="4" fill="#f4dc8a"/><rect x="563" y="446" width="4" height="4" fill="#d8b060"/><rect x="567" y="446" width="4" height="4" fill="#4a2810"/><rect x="491" y="450" width="4" height="4" fill="#4a2810"/><rect x="495" y="450" width="4" height="4" fill="#d8b060"/><rect x="499" y="450" width="4" height="4" fill="#c09848"/><rect x="503" y="450" width="4" height="4" fill="#4a2810"/><rect x="507" y="450" width="4" height="4" fill="#4e2c12"/><rect x="511" y="450" width="4" height="4" fill="#d0a868"/><rect x="515" y="450" width="4" height="4" fill="#4e2c12"/><rect x="519" y="450" width="4" height="4" fill="#7a5424"/><rect x="523" y="450" width="4" height="4" fill="#4e2c12"/><rect x="527" y="450" width="4" height="4" fill="#d0a868"/><rect x="531" y="450" width="4" height="4" fill="#4e2c12"/><rect x="535" y="450" width="4" height="4" fill="#7a5424"/><rect x="539" y="450" width="8" height="4" fill="#4e2c12"/><rect x="547" y="450" width="4" height="4" fill="#7a5424"/><rect x="551" y="450" width="8" height="4" fill="#4e2c12"/><rect x="559" y="450" width="4" height="4" fill="#4a2810"/><rect x="563" y="450" width="4" height="4" fill="#c09848"/><rect x="567" y="450" width="4" height="4" fill="#d8b060"/><rect x="571" y="450" width="4" height="4" fill="#4a2810"/><rect x="491" y="454" width="4" height="4" fill="#4a2810"/><rect x="495" y="454" width="4" height="4" fill="#d8b060"/><rect x="499" y="454" width="4" height="4" fill="#c09848"/><rect x="503" y="454" width="4" height="4" fill="#4a2810"/><rect x="507" y="454" width="4" height="4" fill="#4e2c12"/><rect x="511" y="454" width="8" height="4" fill="#d0a868"/><rect x="519" y="454" width="8" height="4" fill="#4e2c12"/><rect x="527" y="454" width="4" height="4" fill="#7a5424"/><rect x="531" y="454" width="4" height="4" fill="#d0a868"/><rect x="535" y="454" width="4" height="4" fill="#7a5424"/><rect x="539" y="454" width="8" height="4" fill="#4e2c12"/><rect x="547" y="454" width="4" height="4" fill="#7a5424"/><rect x="551" y="454" width="8" height="4" fill="#4e2c12"/><rect x="559" y="454" width="4" height="4" fill="#4a2810"/><rect x="563" y="454" width="4" height="4" fill="#c09848"/><rect x="567" y="454" width="4" height="4" fill="#d8b060"/><rect x="571" y="454" width="4" height="4" fill="#4a2810"/><rect x="487" y="458" width="4" height="4" fill="#4a2810"/><rect x="491" y="458" width="4" height="4" fill="#d8b060"/><rect x="495" y="458" width="4" height="4" fill="#c09848"/><rect x="499" y="458" width="4" height="4" fill="#4a2810"/><rect x="503" y="458" width="4" height="4" fill="#4e2c12"/><rect x="507" y="458" width="4" height="4" fill="#7a5424"/><rect x="511" y="458" width="4" height="4" fill="#4e2c12"/><rect x="515" y="458" width="4" height="4" fill="#7a5424"/><rect x="519" y="458" width="4" height="4" fill="#4e2c12"/><rect x="523" y="458" width="4" height="4" fill="#4a2810"/><rect x="527" y="458" width="4" height="4" fill="#4e2c12"/><rect x="531" y="458" width="4" height="4" fill="#d0a868"/><rect x="535" y="458" width="8" height="4" fill="#4e2c12"/><rect x="543" y="458" width="4" height="4" fill="#7a5424"/><rect x="547" y="458" width="12" height="4" fill="#4e2c12"/><rect x="559" y="458" width="4" height="4" fill="#4a2810"/><rect x="563" y="458" width="4" height="4" fill="#c09848"/><rect x="567" y="458" width="4" height="4" fill="#d8b060"/><rect x="571" y="458" width="4" height="4" fill="#4a2810"/><rect x="487" y="462" width="4" height="4" fill="#4a2810"/><rect x="491" y="462" width="4" height="4" fill="#d8b060"/><rect x="495" y="462" width="4" height="4" fill="#c09848"/><rect x="499" y="462" width="4" height="4" fill="#4a2810"/><rect x="503" y="462" width="8" height="4" fill="#4e2c12"/><rect x="511" y="462" width="4" height="4" fill="#d0a868"/><rect x="515" y="462" width="4" height="4" fill="#4e2c12"/><rect x="519" y="462" width="4" height="4" fill="#4a2810"/><rect x="523" y="462" width="8" height="4" fill="#4e2c12"/><rect x="531" y="462" width="8" height="4" fill="#d0a868"/><rect x="539" y="462" width="4" height="4" fill="#7a5424"/><rect x="543" y="462" width="8" height="4" fill="#4e2c12"/><rect x="551" y="462" width="4" height="4" fill="#7a5424"/><rect x="555" y="462" width="4" height="4" fill="#4e2c12"/><rect x="559" y="462" width="4" height="4" fill="#4a2810"/><rect x="563" y="462" width="4" height="4" fill="#c09848"/><rect x="567" y="462" width="4" height="4" fill="#d8b060"/><rect x="571" y="462" width="4" height="4" fill="#4a2810"/><rect x="487" y="466" width="4" height="4" fill="#4a2810"/><rect x="491" y="466" width="4" height="4" fill="#d8b060"/><rect x="495" y="466" width="4" height="4" fill="#c09848"/><rect x="499" y="466" width="4" height="4" fill="#4a2810"/><rect x="503" y="466" width="4" height="4" fill="#4e2c12"/><rect x="507" y="466" width="4" height="4" fill="#7a5424"/><rect x="511" y="466" width="8" height="4" fill="#4e2c12"/><rect x="519" y="466" width="4" height="4" fill="#7a5424"/><rect x="523" y="466" width="8" height="4" fill="#d0a868"/><rect x="531" y="466" width="4" height="4" fill="#f4dca0"/><rect x="535" y="466" width="4" height="4" fill="#7a5424"/><rect x="539" y="466" width="8" height="4" fill="#d0a868"/><rect x="547" y="466" width="4" height="4" fill="#7a5424"/><rect x="551" y="466" width="8" height="4" fill="#4e2c12"/><rect x="559" y="466" width="4" height="4" fill="#4a2810"/><rect x="563" y="466" width="4" height="4" fill="#c09848"/><rect x="567" y="466" width="4" height="4" fill="#d8b060"/><rect x="571" y="466" width="4" height="4" fill="#4a2810"/><rect x="487" y="470" width="4" height="4" fill="#4a2810"/><rect x="491" y="470" width="4" height="4" fill="#c09848"/><rect x="495" y="470" width="4" height="4" fill="#8a6424"/><rect x="499" y="470" width="4" height="4" fill="#4a2810"/><rect x="503" y="470" width="8" height="4" fill="#4e2c12"/><rect x="511" y="470" width="4" height="4" fill="#7a5424"/><rect x="515" y="470" width="4" height="4" fill="#4a2810"/><rect x="519" y="470" width="4" height="4" fill="#7a5424"/><rect x="523" y="470" width="8" height="4" fill="#d0a868"/><rect x="531" y="470" width="4" height="4" fill="#f4dca0"/><rect x="535" y="470" width="8" height="4" fill="#d0a868"/><rect x="543" y="470" width="8" height="4" fill="#7a5424"/><rect x="551" y="470" width="8" height="4" fill="#4e2c12"/><rect x="559" y="470" width="4" height="4" fill="#4a2810"/><rect x="563" y="470" width="4" height="4" fill="#8a6424"/><rect x="567" y="470" width="4" height="4" fill="#c09848"/><rect x="571" y="470" width="4" height="4" fill="#4a2810"/><rect x="487" y="474" width="4" height="4" fill="#4a2810"/><rect x="491" y="474" width="4" height="4" fill="#c09848"/><rect x="495" y="474" width="4" height="4" fill="#8a6424"/><rect x="499" y="474" width="4" height="4" fill="#4a2810"/><rect x="503" y="474" width="8" height="4" fill="#4e2c12"/><rect x="511" y="474" width="4" height="4" fill="#4a2810"/><rect x="515" y="474" width="4" height="4" fill="#4e2c12"/><rect x="519" y="474" width="8" height="4" fill="#d0a868"/><rect x="527" y="474" width="8" height="4" fill="#f4dca0"/><rect x="535" y="474" width="8" height="4" fill="#d0a868"/><rect x="543" y="474" width="4" height="4" fill="#7a5424"/><rect x="547" y="474" width="4" height="4" fill="#d0a868"/><rect x="551" y="474" width="4" height="4" fill="#7a5424"/><rect x="555" y="474" width="4" height="4" fill="#4e2c12"/><rect x="559" y="474" width="4" height="4" fill="#4a2810"/><rect x="563" y="474" width="4" height="4" fill="#8a6424"/><rect x="567" y="474" width="4" height="4" fill="#c09848"/><rect x="571" y="474" width="4" height="4" fill="#4a2810"/><rect x="491" y="478" width="4" height="4" fill="#4a2810"/><rect x="495" y="478" width="8" height="4" fill="#8a6424"/><rect x="503" y="478" width="4" height="4" fill="#4a2810"/><rect x="507" y="478" width="8" height="4" fill="#4e2c12"/><rect x="515" y="478" width="8" height="4" fill="#d0a868"/><rect x="523" y="478" width="4" height="4" fill="#f4dca0"/><rect x="527" y="478" width="4" height="4" fill="#4e2c12"/><rect x="531" y="478" width="4" height="4" fill="#7a5424"/><rect x="535" y="478" width="4" height="4" fill="#f4dca0"/><rect x="539" y="478" width="4" height="4" fill="#4e2c12"/><rect x="543" y="478" width="4" height="4" fill="#d0a868"/><rect x="547" y="478" width="4" height="4" fill="#7a5424"/><rect x="551" y="478" width="4" height="4" fill="#4e2c12"/><rect x="555" y="478" width="4" height="4" fill="#4a2810"/><rect x="559" y="478" width="8" height="4" fill="#8a6424"/><rect x="567" y="478" width="4" height="4" fill="#4a2810"/><rect x="491" y="482" width="4" height="4" fill="#4a2810"/><rect x="495" y="482" width="8" height="4" fill="#8a6424"/><rect x="503" y="482" width="8" height="4" fill="#4a2810"/><rect x="511" y="482" width="8" height="4" fill="#4e2c12"/><rect x="519" y="482" width="8" height="4" fill="#d0a868"/><rect x="527" y="482" width="8" height="4" fill="#7a5424"/><rect x="535" y="482" width="4" height="4" fill="#4e2c12"/><rect x="539" y="482" width="4" height="4" fill="#d0a868"/><rect x="543" y="482" width="12" height="4" fill="#4e2c12"/><rect x="555" y="482" width="4" height="4" fill="#4a2810"/><rect x="559" y="482" width="8" height="4" fill="#8a6424"/><rect x="567" y="482" width="4" height="4" fill="#4a2810"/><rect x="495" y="486" width="4" height="4" fill="#4a2810"/><rect x="499" y="486" width="8" height="4" fill="#8a6424"/><rect x="507" y="486" width="52" height="4" fill="#4a2810"/><rect x="559" y="486" width="8" height="4" fill="#8a6424"/><rect x="567" y="486" width="4" height="4" fill="#4a2810"/><rect x="495" y="490" width="4" height="4" fill="#4a2810"/><rect x="499" y="490" width="68" height="4" fill="#8a6424"/><rect x="567" y="490" width="4" height="4" fill="#4a2810"/><rect x="499" y="494" width="8" height="4" fill="#4a2810"/><rect x="507" y="494" width="52" height="4" fill="#8a6424"/><rect x="559" y="494" width="8" height="4" fill="#4a2810"/><rect x="507" y="498" width="52" height="4" fill="#4a2810"/></g>
<!-- floating piece in selection -->
<g><rect x="359" y="246" width="8" height="4" fill="#4a2410"/><rect x="415" y="246" width="8" height="4" fill="#4a2410"/><rect x="355" y="250" width="4" height="4" fill="#4a2410"/><rect x="359" y="250" width="8" height="4" fill="#e0b478"/><rect x="367" y="250" width="4" height="4" fill="#4a2410"/><rect x="411" y="250" width="4" height="4" fill="#4a2410"/><rect x="415" y="250" width="8" height="4" fill="#e0b478"/><rect x="423" y="250" width="4" height="4" fill="#4a2410"/><rect x="355" y="254" width="4" height="4" fill="#4a2410"/><rect x="359" y="254" width="8" height="4" fill="#f8e4a0"/><rect x="367" y="254" width="4" height="4" fill="#4a2410"/><rect x="411" y="254" width="4" height="4" fill="#4a2410"/><rect x="415" y="254" width="8" height="4" fill="#f8e4a0"/><rect x="423" y="254" width="4" height="4" fill="#4a2410"/><rect x="355" y="258" width="4" height="4" fill="#4a2410"/><rect x="359" y="258" width="8" height="4" fill="#8a5a36"/><rect x="367" y="258" width="4" height="4" fill="#4a2410"/><rect x="387" y="258" width="8" height="4" fill="#4a2410"/><rect x="411" y="258" width="4" height="4" fill="#4a2410"/><rect x="415" y="258" width="8" height="4" fill="#8a5a36"/><rect x="423" y="258" width="4" height="4" fill="#4a2410"/><rect x="355" y="262" width="4" height="4" fill="#4a2410"/><rect x="359" y="262" width="12" height="4" fill="#c08a52"/><rect x="371" y="262" width="16" height="4" fill="#4a2410"/><rect x="387" y="262" width="8" height="4" fill="#f8e4a0"/><rect x="395" y="262" width="16" height="4" fill="#4a2410"/><rect x="411" y="262" width="12" height="4" fill="#c08a52"/><rect x="423" y="262" width="4" height="4" fill="#4a2410"/><rect x="355" y="266" width="4" height="4" fill="#4a2410"/><rect x="359" y="266" width="12" height="4" fill="#c08a52"/><rect x="371" y="266" width="8" height="4" fill="#e0b478"/><rect x="379" y="266" width="4" height="4" fill="#8a5a36"/><rect x="383" y="266" width="4" height="4" fill="#e0b478"/><rect x="387" y="266" width="8" height="4" fill="#c08a52"/><rect x="395" y="266" width="4" height="4" fill="#e0b478"/><rect x="399" y="266" width="4" height="4" fill="#8a5a36"/><rect x="403" y="266" width="8" height="4" fill="#e0b478"/><rect x="411" y="266" width="12" height="4" fill="#c08a52"/><rect x="423" y="266" width="4" height="4" fill="#4a2410"/><rect x="355" y="270" width="4" height="4" fill="#4a2410"/><rect x="359" y="270" width="12" height="4" fill="#c08a52"/><rect x="371" y="270" width="16" height="4" fill="#8a5a36"/><rect x="387" y="270" width="8" height="4" fill="#e0b478"/><rect x="395" y="270" width="16" height="4" fill="#8a5a36"/><rect x="411" y="270" width="12" height="4" fill="#c08a52"/><rect x="423" y="270" width="4" height="4" fill="#4a2410"/><rect x="355" y="274" width="4" height="4" fill="#4a2410"/><rect x="359" y="274" width="8" height="4" fill="#8a5a36"/><rect x="367" y="274" width="20" height="4" fill="#c08a52"/><rect x="387" y="274" width="8" height="4" fill="#e0b478"/><rect x="395" y="274" width="24" height="4" fill="#c08a52"/><rect x="419" y="274" width="4" height="4" fill="#8a5a36"/><rect x="423" y="274" width="4" height="4" fill="#4a2410"/><rect x="359" y="278" width="16" height="4" fill="#4a2410"/><rect x="375" y="278" width="12" height="4" fill="#8a5a36"/><rect x="387" y="278" width="8" height="4" fill="#e0b478"/><rect x="395" y="278" width="8" height="4" fill="#8a5a36"/><rect x="403" y="278" width="20" height="4" fill="#4a2410"/><rect x="371" y="282" width="4" height="4" fill="#8a5a36"/><rect x="375" y="282" width="4" height="4" fill="#4a2410"/><rect x="379" y="282" width="4" height="4" fill="#e0b478"/><rect x="383" y="282" width="16" height="4" fill="#c08a52"/><rect x="399" y="282" width="4" height="4" fill="#e0b478"/><rect x="403" y="282" width="4" height="4" fill="#4a2410"/><rect x="407" y="282" width="4" height="4" fill="#8a5a36"/><rect x="411" y="282" width="4" height="4" fill="#4a2410"/><rect x="371" y="286" width="4" height="4" fill="#8a5a36"/><rect x="375" y="286" width="4" height="4" fill="#4a2410"/><rect x="379" y="286" width="24" height="4" fill="#e0b478"/><rect x="403" y="286" width="4" height="4" fill="#4a2410"/><rect x="407" y="286" width="4" height="4" fill="#8a5a36"/><rect x="411" y="286" width="4" height="4" fill="#4a2410"/><rect x="371" y="290" width="4" height="4" fill="#c08a52"/><rect x="375" y="290" width="4" height="4" fill="#e0b478"/><rect x="379" y="290" width="24" height="4" fill="#4a2410"/><rect x="403" y="290" width="4" height="4" fill="#e0b478"/><rect x="407" y="290" width="4" height="4" fill="#c08a52"/><rect x="411" y="290" width="4" height="4" fill="#4a2410"/><rect x="371" y="294" width="4" height="4" fill="#4a2410"/><rect x="375" y="294" width="32" height="4" fill="#e0b478"/><rect x="407" y="294" width="4" height="4" fill="#4a2410"/><rect x="375" y="298" width="32" height="4" fill="#4a2410"/></g>
</svg>
<!-- ICONS -->
<svg class="a" style="left:0;top:0" width="1198" height="721" viewBox="0 0 1198 721">
<defs>
 <linearGradient id="pbody" x1="0" x2="1" y1="0" y2="0"><stop offset="0" stop-color="#cfcfcf"/><stop offset=".45" stop-color="#9a9a9a"/><stop offset=".55" stop-color="#5a5a5a"/><stop offset="1" stop-color="#3e3e3e"/></linearGradient>
 <linearGradient id="ptip" x1="0" x2="1"><stop offset="0" stop-color="#ffffff"/><stop offset=".6" stop-color="#e8e8e8"/><stop offset="1" stop-color="#9a9a9a"/></linearGradient>
 <radialGradient id="shad"><stop offset="0" stop-color="#000" stop-opacity=".75"/><stop offset=".6" stop-color="#000" stop-opacity=".45"/><stop offset="1" stop-color="#000" stop-opacity="0"/></radialGradient>
 <linearGradient id="grn" x1="0" x2="1"><stop offset="0" stop-color="#22b530"/><stop offset=".55" stop-color="#8ccf1c"/><stop offset="1" stop-color="#c8e612"/></linearGradient>
 <linearGradient id="grn2" x1="1" x2="0"><stop offset="0" stop-color="#22b530"/><stop offset=".55" stop-color="#8ccf1c"/><stop offset="1" stop-color="#c8e612"/></linearGradient>
</defs>
<!-- pencil -->
 <linearGradient id="pbody2" x1="0" x2="1" y1="0" y2="0"><stop offset="0" stop-color="#8e8e8e"/><stop offset=".1" stop-color="#c4c4c4"/><stop offset=".22" stop-color="#a2a2a2"/><stop offset=".36" stop-color="#d4d4d4"/><stop offset=".52" stop-color="#9a9a9a"/><stop offset=".6" stop-color="#5c5a5a"/><stop offset="1" stop-color="#3a3838"/></linearGradient>
<ellipse cx="975" cy="549" rx="48" ry="5.5" fill="url(#shad)"/>
<g transform="translate(931,550) rotate(29.5)">
 <polygon points="0,0 -2.5,-4 -9.5,-21 9.5,-21 2.5,-4" fill="url(#ptip)"/>
 <polygon points="0,0 -1.5,-4 1.5,-4" fill="#888"/>
 <rect x="-9.5" y="-88" width="19" height="67" fill="url(#pbody2)"/>
 <rect x="-9.5" y="-96" width="19" height="8" fill="url(#ptip)"/>
 <rect x="-8" y="-99" width="16" height="3" fill="#9a9a9a"/>
 <rect x="-7" y="-110" width="14" height="11" rx="1.5" fill="url(#ptip)"/>
</g>
<!-- eraser -->
<ellipse cx="1122" cy="560" rx="31" ry="4.5" fill="url(#shad)"/>
<g transform="translate(1115.9,532.3) rotate(26)">
 <polygon points="12,-26 19,-23 19,15 12,12" fill="#0c2840"/>
 <rect x="-12" y="-26" width="24" height="38" fill="#1d5070"/>
 <rect x="-4.5" y="-26" width="9" height="38" fill="#f4f4f4"/>
 <text x="0" y="0" transform="rotate(-90) translate(7,2.1)" font-family="Liberation Sans" font-weight="bold" font-size="5.6" fill="#1d4d6e" text-anchor="middle">RPG MAKER</text>
 <polygon points="12,11 19,14 18,24 12,26" fill="#b8b8b8"/>
 <rect x="-13" y="11" width="25" height="15" fill="#e4e4e4"/>
 <rect x="-13" y="11" width="25" height="3" fill="#f8f8f8"/>
</g>
<!-- undo -->
<g transform="translate(887,643)">
 <ellipse cx="30" cy="44" rx="16" ry="3" fill="url(#shad)" opacity=".45"/>
 <path d="M10.9,35 L15.5,15.7 L21.4,19.8 C25,16 28,15.5 31,15.7 C40,16 46,22 46,31 C46,37 44,41 41,44 C42,38 41,33 38,29 C36,25 33,23.3 30,23.5 C28,23.6 26.5,24.3 25.5,25.3 L30.1,28.6 Z" fill="url(#grn)"/>
</g>
<g transform="translate(958,643) translate(61,0) scale(-1,1)">
 <ellipse cx="30" cy="44" rx="16" ry="3" fill="url(#shad)" opacity=".45"/>
 <path d="M10.9,35 L15.5,15.7 L21.4,19.8 C25,16 28,15.5 31,15.7 C40,16 46,22 46,31 C46,37 44,41 41,44 C42,38 41,33 38,29 C36,25 33,23.3 30,23.5 C28,23.6 26.5,24.3 25.5,25.3 L30.1,28.6 Z" fill="url(#grn)"/>
</g>
<!-- palette -->
<g transform="translate(1031,643)">
 <ellipse cx="38" cy="42" rx="14" ry="2.5" fill="url(#shad)" opacity=".7"/>
 <g transform="translate(25,41)">
  <rect x="0" y="-4" width="25" height="8" fill="#c62026" transform="rotate(-118)"/>
  <rect x="0" y="-4" width="25" height="8" fill="#e8b92c" transform="rotate(-100)"/>
  <rect x="0" y="-4" width="25" height="8" fill="#8cbf3a" transform="rotate(-83)"/>
  <rect x="0" y="-4" width="25" height="8" fill="#2b8fd6" transform="rotate(-66)"/>
  <rect x="0" y="-4" width="25" height="8" fill="#7b3c9e" transform="rotate(-48)"/>
  <rect x="0" y="-4" width="26" height="8" fill="#fafafa" transform="rotate(-27)"/>
  <circle cx="22" cy="0" r="1.5" fill="#555" transform="rotate(-27)"/>
 </g>
</g>
<!-- save -->
<g transform="translate(1115,643)">
 <ellipse cx="30" cy="46" rx="18" ry="3" fill="url(#shad)" opacity=".7"/>
 <rect x="16" y="16" width="28.5" height="29" fill="#4a4748"/>
 <rect x="21" y="16" width="19.5" height="11" fill="#ececec"/>
 <rect x="35" y="19.5" width="2.5" height="5" fill="#4a4748"/>
 <rect x="21" y="31" width="19.5" height="13.5" fill="#f4f4f4"/>
 <rect x="21" y="31" width="19.5" height="3.8" fill="#8dc63f"/>
</g>
</svg>

<!-- TOOLBAR ICONS -->
<svg class="a" style="left:0;top:0" width="1198" height="721" viewBox="0 0 1198 721">
<defs>
 <clipPath id="c1"><rect x="304.5" y="78.5" width="20" height="20"/></clipPath>
</defs>
<g stroke="#262424" stroke-width="1.5" fill="#858080">
 <!-- b1 -->
 <rect x="304.5" y="78.5" width="20" height="20"/>
 <path d="M324.5,81 C323,90 317,96 305,98.5 L324.5,98.5 Z" fill="#4a4646" stroke="none"/>
 <rect x="304.5" y="78.5" width="20" height="20" fill="none"/>
 <!-- b2 -->
 <rect x="369.5" y="69.5" width="19.5" height="38.5"/>
 <path d="M389,70 C388,85 385,98 378,108 L389,108 Z" fill="#4a4646" stroke="none"/>
 <rect x="369.5" y="69.5" width="19.5" height="38.5" fill="none"/>
 <line x1="369.5" y1="88.5" x2="389" y2="88.5"/>
 <!-- b3 -->
 <rect x="423.5" y="78.5" width="38.5" height="19"/>
 <path d="M424,97.5 C433,96 448,94 462,86 L462,97.5 Z" fill="#4a4646" stroke="none"/>
 <rect x="423.5" y="78.5" width="38.5" height="19" fill="none"/>
 <line x1="442.5" y1="78.5" x2="442.5" y2="97.5"/>
 <!-- b4 -->
 <rect x="487.5" y="69.5" width="38.5" height="38"/>
 <path d="M488,97 C500,95 515,93 526,90 L526,107.5 L488,107.5 Z" fill="#4a4646" stroke="none"/>
 <rect x="487.5" y="69.5" width="38.5" height="38" fill="none"/>
 <line x1="506.5" y1="69.5" x2="506.5" y2="107.5"/>
 <line x1="487.5" y1="88.5" x2="526" y2="88.5"/>
 <!-- b5 -->
 <rect x="551.5" y="69.5" width="39" height="39" rx="8"/>
 <path d="M552,86 C565,83 578,83 590,86 L590,100 C590,105 586,108 582,108 L560,108 C556,108 552,105 552,100 Z" fill="#4a4646" stroke="none"/>
 <rect x="551.5" y="69.5" width="39" height="39" rx="8" fill="none"/>
 <!-- b6 -->
 <path d="M634.5,71 L654.5,87.5 L650.3,87.5 L650.3,107.5 L639.5,107.5 L639.5,93.5 L630.5,93.5 L630.5,107.5 L620.2,107.5 L620.2,87.5 L615.5,87.5 Z"/>
</g>
<path d="M620.5,93 C632,91 642,88 650,82 L650,107 L639.8,107 L639.8,94 L630.2,94 L630.2,107 L620.5,107 Z" fill="#4a4646"/>
<path d="M634.5,71 L654.5,87.5 L650.3,87.5 L650.3,107.5 L639.5,107.5 L639.5,93.5 L630.5,93.5 L630.5,107.5 L620.2,107.5 L620.2,87.5 L615.5,87.5 Z" fill="none" stroke="#262424" stroke-width="1.5"/>
<text x="571" y="87.5" font-family="Liberation Sans" font-weight="bold" font-size="10" fill="#aaa6a6" text-anchor="middle">AUTO</text>
<text x="571" y="99.3" font-family="Liberation Sans" font-weight="bold" font-size="10" fill="#aaa6a6" text-anchor="middle">TILE</text>
</svg>
</body></html>
